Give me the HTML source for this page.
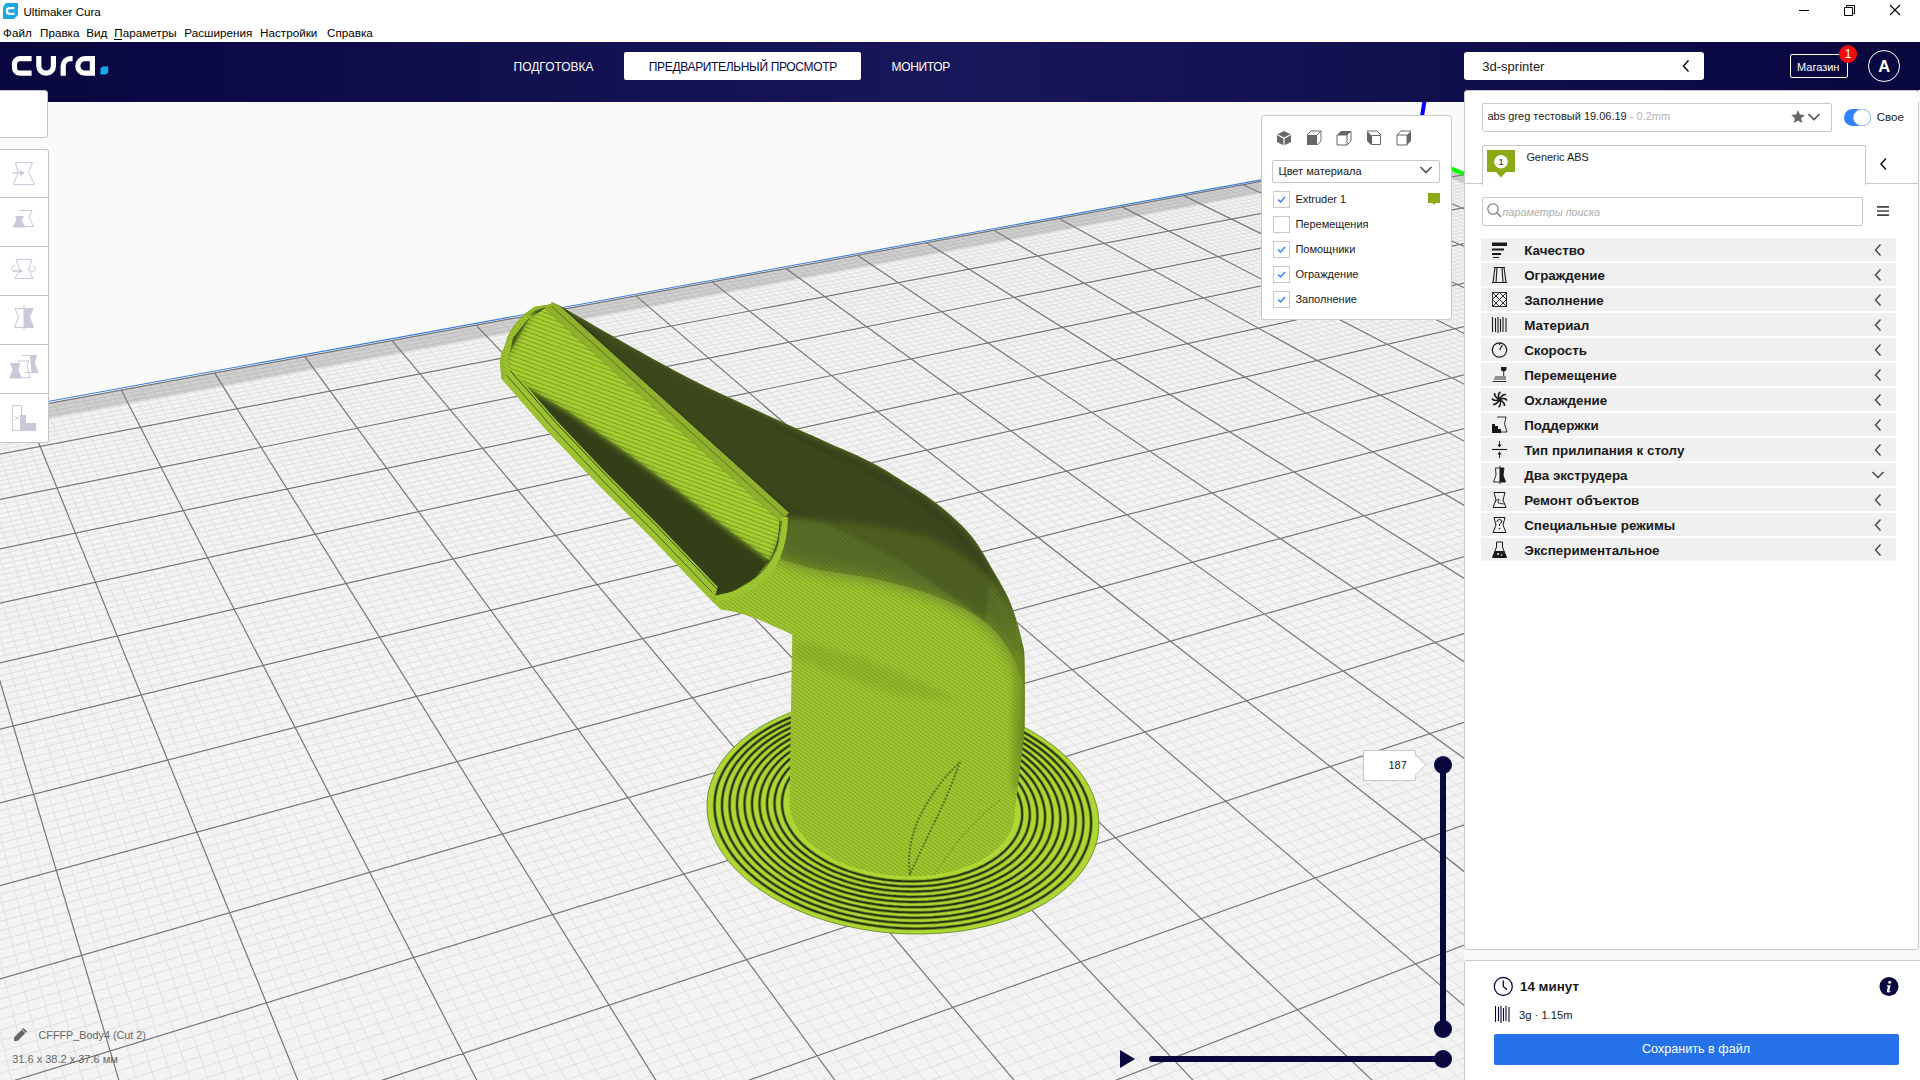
<!DOCTYPE html>
<html><head><meta charset="utf-8">
<style>
*{box-sizing:border-box;margin:0;padding:0}
html,body{width:1920px;height:1080px;overflow:hidden;background:#fafafa;font-family:"Liberation Sans",sans-serif;color:#191919}
.abs{position:absolute}
#titlebar{position:absolute;left:0;top:0;width:1920px;height:21px;background:#fff}
#menubar{position:absolute;left:0;top:21px;width:1920px;height:21px;background:#fff}
.menu{position:absolute;top:26px;font-size:12px;color:#000;line-height:14px;white-space:nowrap}
#header{position:absolute;left:0;top:42px;width:1920px;height:60px;background:linear-gradient(90deg,#08073f 0%,#19175b 50%,#08073f 100%)}
.tab{position:absolute;top:59px;font-size:12px;line-height:14px;color:#fff;white-space:nowrap}
#vp{position:absolute;left:0;top:102px;width:1920px;height:978px}
.tbtn{position:absolute;left:0;width:49px;height:49px;background:#fff;border:1px solid #c4c4c4;border-left:none}
.panel{position:absolute;background:#fff;border:1px solid #c8c8c8}
.txt{position:absolute;white-space:nowrap;line-height:1}
.cat{position:absolute;left:1481px;width:415px;height:23px;background:#f0f0f0}
.cat .lbl{position:absolute;left:43px;top:5px;font-size:13.4px;font-weight:bold;color:#191919;white-space:nowrap;line-height:14px}
.cat svg{position:absolute}
.chk{position:absolute;left:1272px;width:18px;height:18px;border:1px solid #c8c8c8;background:#fff}
.vlbl{position:absolute;left:1295px;font-size:11.5px;color:#191919;white-space:nowrap;line-height:13px}
</style></head><body>

<svg class="abs" style="left:0;top:0" width="1920" height="1080" viewBox="0 0 1920 1080">
<rect x="0" y="102" width="1464" height="978" fill="#fafafa"/>
<defs><clipPath id="vpc"><rect x="0" y="102" width="1464" height="978"/></clipPath></defs>
<g clip-path="url(#vpc)">
<polygon fill="#f3f3f3" points="-401.6,485.4 1417.4,152.5 2714.5,675.1 -447.6,2156.8"/>
<path d="M-390.2 483.3L-417.8 2142.8M-378.7 481.2L-388.3 2129.0M-367.3 479.1L-359.1 2115.3M-356.0 477.0L-330.2 2101.8M-344.7 474.9L-301.6 2088.4M-333.5 472.9L-273.2 2075.1M-322.3 470.8L-245.2 2061.9M-311.1 468.8L-217.4 2048.9M-300.0 466.8L-189.9 2036.0M-277.9 462.7L-135.7 2010.6M-266.9 460.7L-109.0 1998.1M-256.0 458.7L-82.5 1985.7M-245.1 456.7L-56.3 1973.5M-234.2 454.7L-30.4 1961.3M-223.4 452.7L-4.7 1949.3M-212.6 450.8L20.7 1937.3M-201.9 448.8L46.0 1925.5M-191.2 446.8L70.9 1913.8M-169.9 443.0L120.2 1890.7M-159.3 441.0L144.5 1879.4M-148.8 439.1L168.6 1868.1M-138.3 437.2L192.4 1856.9M-127.9 435.3L216.0 1845.8M-117.5 433.4L239.4 1834.9M-107.1 431.5L262.6 1824.0M-96.8 429.6L285.6 1813.2M-86.5 427.7L308.4 1802.5M-66.0 423.9L353.4 1781.5M-55.8 422.1L375.6 1771.1M-45.7 420.2L397.6 1760.8M-35.6 418.4L419.4 1750.6M-25.5 416.5L441.0 1740.4M-15.5 414.7L462.4 1730.4M-5.5 412.9L483.6 1720.4M4.5 411.1L504.7 1710.6M14.4 409.2L525.5 1700.8M34.1 405.6L566.8 1681.5M43.9 403.8L587.1 1672.0M53.7 402.1L607.3 1662.5M63.4 400.3L627.3 1653.1M73.1 398.5L647.1 1643.8M82.8 396.7L666.8 1634.6M92.4 395.0L686.3 1625.5M102.0 393.2L705.6 1616.4M111.6 391.5L724.8 1607.4M130.6 388.0L762.7 1589.7M140.0 386.3L781.5 1580.9M149.5 384.5L800.0 1572.2M158.9 382.8L818.5 1563.5M168.2 381.1L836.7 1555.0M177.5 379.4L854.9 1546.5M186.8 377.7L872.8 1538.1M196.1 376.0L890.7 1529.7M205.3 374.3L908.4 1521.4M223.6 371.0L943.4 1505.0M232.8 369.3L960.6 1496.9M241.9 367.6L977.8 1488.9M250.9 366.0L994.8 1480.9M260.0 364.3L1011.7 1473.0M268.9 362.7L1028.5 1465.1M277.9 361.0L1045.1 1457.3M286.8 359.4L1061.6 1449.6M295.7 357.8L1078.0 1441.9M313.5 354.5L1110.4 1426.8M322.3 352.9L1126.4 1419.3M331.0 351.3L1142.3 1411.8M339.8 349.7L1158.0 1404.4M348.5 348.1L1173.7 1397.1M357.2 346.5L1189.2 1389.8M365.9 344.9L1204.7 1382.6M374.5 343.4L1220.0 1375.4M383.1 341.8L1235.2 1368.3M400.2 338.7L1265.3 1354.2M408.7 337.1L1280.1 1347.2M417.2 335.5L1294.9 1340.3M425.6 334.0L1309.5 1333.4M434.1 332.5L1324.1 1326.6M442.5 330.9L1338.5 1319.8M450.8 329.4L1352.9 1313.1M459.2 327.9L1367.1 1306.4M467.5 326.3L1381.3 1299.8M484.0 323.3L1409.3 1286.7M492.2 321.8L1423.1 1280.2M500.4 320.3L1436.9 1273.8M508.6 318.8L1450.5 1267.4M516.7 317.3L1464.1 1261.0M524.9 315.8L1477.6 1254.7M533.0 314.4L1490.9 1248.4M541.0 312.9L1504.2 1242.2M549.1 311.4L1517.4 1236.0M565.0 308.5L1543.5 1223.8M573.0 307.0L1556.5 1217.7M580.9 305.6L1569.3 1211.7M588.8 304.1L1582.1 1205.7M596.7 302.7L1594.7 1199.8M604.6 301.3L1607.3 1193.9M612.4 299.8L1619.8 1188.0M620.2 298.4L1632.2 1182.2M628.0 297.0L1644.6 1176.4M643.4 294.2L1669.0 1165.0M651.1 292.7L1681.1 1159.3M658.8 291.3L1693.1 1153.7M666.5 289.9L1705.1 1148.1M674.1 288.5L1716.9 1142.5M681.7 287.2L1728.7 1137.0M689.3 285.8L1740.4 1131.5M696.8 284.4L1752.1 1126.1M704.3 283.0L1763.6 1120.6M719.3 280.3L1786.5 1109.9M726.8 278.9L1797.9 1104.6M734.2 277.5L1809.1 1099.3M741.6 276.2L1820.3 1094.1M749.0 274.8L1831.5 1088.9M756.3 273.5L1842.5 1083.7M763.7 272.2L1853.5 1078.5M771.0 270.8L1864.5 1073.4M778.3 269.5L1875.3 1068.3M792.8 266.8L1896.8 1058.2M800.0 265.5L1907.5 1053.2M807.2 264.2L1918.1 1048.3M814.4 262.9L1928.6 1043.3M821.5 261.6L1939.1 1038.4M828.7 260.3L1949.5 1033.6M835.8 259.0L1959.8 1028.7M842.9 257.7L1970.1 1023.9M849.9 256.4L1980.3 1019.1M864.0 253.8L2000.5 1009.6M871.0 252.5L2010.6 1004.9M878.0 251.2L2020.5 1000.3M884.9 250.0L2030.5 995.6M891.9 248.7L2040.3 991.0M898.8 247.4L2050.1 986.4M905.7 246.2L2059.9 981.8M912.5 244.9L2069.5 977.3M919.4 243.7L2079.2 972.8M933.0 241.2L2098.2 963.9M939.8 239.9L2107.7 959.4M946.6 238.7L2117.1 955.0M953.3 237.5L2126.5 950.6M960.0 236.2L2135.8 946.3M966.7 235.0L2145.0 941.9M973.4 233.8L2154.2 937.6M980.1 232.6L2163.3 933.4M986.7 231.3L2172.4 929.1M1000.0 228.9L2190.5 920.6M1006.5 227.7L2199.4 916.5M1013.1 226.5L2208.3 912.3M1019.7 225.3L2217.1 908.2M1026.2 224.1L2225.9 904.0M1032.7 222.9L2234.6 899.9M1039.2 221.8L2243.3 895.9M1045.6 220.6L2252.0 891.8M1052.1 219.4L2260.6 887.8M1064.9 217.0L2277.6 879.8M1071.3 215.9L2286.1 875.8M1077.7 214.7L2294.5 871.9M1084.0 213.5L2302.8 868.0M1090.4 212.4L2311.2 864.1M1096.7 211.2L2319.4 860.2M1103.0 210.1L2327.7 856.4M1109.2 208.9L2335.8 852.5M1115.5 207.8L2344.0 848.7M1128.0 205.5L2360.1 841.1M1134.2 204.4L2368.1 837.4M1140.4 203.2L2376.1 833.7M1146.5 202.1L2384.0 829.9M1152.7 201.0L2391.9 826.2M1158.8 199.9L2399.8 822.6M1164.9 198.7L2407.6 818.9M1171.0 197.6L2415.3 815.3M1177.1 196.5L2423.0 811.7M1189.2 194.3L2438.4 804.5M1195.2 193.2L2446.0 800.9M1201.2 192.1L2453.5 797.4M1207.2 191.0L2461.0 793.9M1213.2 189.9L2468.5 790.3M1219.2 188.8L2476.0 786.9M1225.1 187.7L2483.4 783.4M1231.0 186.7L2490.8 779.9M1236.9 185.6L2498.1 776.5M1248.7 183.4L2512.6 769.7M1254.5 182.3L2519.9 766.3M1260.4 181.3L2527.0 762.9M1266.2 180.2L2534.2 759.6M1272.0 179.2L2541.3 756.2M1277.8 178.1L2548.4 752.9M1283.6 177.0L2555.4 749.6M1289.3 176.0L2562.4 746.3M1295.1 174.9L2569.4 743.1M1306.5 172.8L2583.3 736.6M1312.2 171.8L2590.1 733.4M1317.9 170.8L2597.0 730.2M1323.6 169.7L2603.8 727.0M1329.2 168.7L2610.5 723.8M1334.8 167.7L2617.3 720.6M1340.4 166.6L2624.0 717.5M1346.0 165.6L2630.6 714.4M1351.6 164.6L2637.3 711.3M1362.7 162.6L2650.5 705.1M1368.3 161.5L2657.0 702.0M1373.8 160.5L2663.5 699.0M1379.3 159.5L2670.0 695.9M1384.8 158.5L2676.4 692.9M1390.3 157.5L2682.9 689.9M1395.7 156.5L2689.3 686.9M1401.2 155.5L2695.6 683.9M1406.6 154.5L2701.9 681.0M1417.4 152.5L2714.5 675.1M-401.8 490.3L1423.2 154.9M-401.9 494.7L1428.3 156.9M-402.0 499.1L1433.4 159.0M-402.1 503.5L1438.5 161.0M-402.2 508.0L1443.6 163.1M-402.4 512.5L1448.8 165.2M-402.5 517.1L1454.0 167.3M-402.6 521.6L1459.2 169.4M-402.7 526.3L1464.5 171.5M-403.0 535.6L1475.1 175.8M-403.1 540.4L1480.4 177.9M-403.3 545.2L1485.8 180.1M-403.4 550.0L1491.2 182.3M-403.5 554.9L1496.7 184.5M-403.7 559.8L1502.2 186.7M-403.8 564.7L1507.7 188.9M-403.9 569.7L1513.2 191.1M-404.1 574.8L1518.8 193.4M-404.4 585.0L1530.0 197.9M-404.5 590.2L1535.7 200.2M-404.7 595.4L1541.4 202.5M-404.8 600.7L1547.2 204.8M-404.9 606.0L1553.0 207.1M-405.1 611.4L1558.8 209.5M-405.2 616.8L1564.6 211.8M-405.4 622.3L1570.5 214.2M-405.5 627.8L1576.4 216.6M-405.8 639.0L1588.4 221.4M-406.0 644.7L1594.4 223.8M-406.2 650.4L1600.5 226.3M-406.3 656.2L1606.6 228.7M-406.5 662.0L1612.7 231.2M-406.6 667.9L1618.9 233.7M-406.8 673.9L1625.1 236.2M-407.0 679.9L1631.4 238.7M-407.1 686.0L1637.7 241.3M-407.5 698.3L1650.4 246.4M-407.7 704.5L1656.8 249.0M-407.8 710.8L1663.3 251.6M-408.0 717.2L1669.8 254.2M-408.2 723.7L1676.3 256.8M-408.4 730.2L1682.9 259.5M-408.5 736.7L1689.5 262.2M-408.7 743.4L1696.2 264.8M-408.9 750.1L1702.9 267.5M-409.3 763.7L1716.4 273.0M-409.5 770.6L1723.3 275.8M-409.7 777.6L1730.2 278.5M-409.9 784.7L1737.1 281.3M-410.1 791.8L1744.1 284.1M-410.3 799.0L1751.1 287.0M-410.5 806.3L1758.2 289.8M-410.7 813.7L1765.3 292.7M-410.9 821.1L1772.5 295.6M-411.3 836.2L1787.0 301.4M-411.5 843.9L1794.3 304.4M-411.7 851.7L1801.7 307.3M-411.9 859.6L1809.1 310.3M-412.1 867.5L1816.5 313.3M-412.4 875.5L1824.1 316.4M-412.6 883.7L1831.6 319.4M-412.8 891.9L1839.2 322.5M-413.0 900.2L1846.9 325.6M-413.5 917.1L1862.4 331.8M-413.7 925.7L1870.3 335.0M-414.0 934.4L1878.2 338.1M-414.2 943.2L1886.1 341.3M-414.5 952.1L1894.1 344.6M-414.7 961.2L1902.2 347.8M-415.0 970.3L1910.3 351.1M-415.2 979.5L1918.5 354.4M-415.5 988.9L1926.7 357.7M-416.0 1007.9L1943.3 364.4M-416.3 1017.6L1951.8 367.8M-416.5 1027.4L1960.2 371.2M-416.8 1037.3L1968.8 374.7M-417.1 1047.4L1977.4 378.1M-417.4 1057.6L1986.0 381.6M-417.6 1067.9L1994.8 385.1M-417.9 1078.3L2003.6 388.7M-418.2 1088.9L2012.4 392.2M-418.8 1110.5L2030.3 399.5M-419.1 1121.5L2039.4 403.1M-419.4 1132.6L2048.5 406.8M-419.7 1143.9L2057.7 410.5M-420.1 1155.3L2067.0 414.2M-420.4 1166.9L2076.3 418.0M-420.7 1178.7L2085.7 421.8M-421.0 1190.6L2095.2 425.6M-421.4 1202.7L2104.8 429.4M-422.0 1227.3L2124.1 437.2M-422.4 1239.9L2133.9 441.2M-422.7 1252.7L2143.8 445.2M-423.1 1265.6L2153.7 449.2M-423.5 1278.8L2163.7 453.2M-423.8 1292.1L2173.8 457.3M-424.2 1305.6L2184.0 461.4M-424.6 1319.3L2194.2 465.5M-424.9 1333.2L2204.6 469.7M-425.7 1361.7L2225.5 478.1M-426.1 1376.2L2236.1 482.4M-426.5 1391.0L2246.8 486.7M-427.0 1406.0L2257.6 491.0M-427.4 1421.2L2268.4 495.4M-427.8 1436.7L2279.4 499.8M-428.2 1452.4L2290.4 504.2M-428.7 1468.3L2301.5 508.7M-429.1 1484.6L2312.8 513.2M-430.0 1517.8L2335.5 522.4M-430.5 1534.8L2347.0 527.0M-431.0 1552.0L2358.6 531.7M-431.5 1569.6L2370.3 536.4M-431.9 1587.5L2382.2 541.2M-432.4 1605.7L2394.1 546.0M-433.0 1624.1L2406.1 550.8M-433.5 1642.9L2418.2 555.7M-434.0 1662.0L2430.4 560.6M-435.1 1701.3L2455.2 570.6M-435.6 1721.4L2467.8 575.7M-436.2 1741.9L2480.4 580.8M-436.8 1762.8L2493.2 585.9M-437.4 1784.1L2506.1 591.1M-437.9 1805.7L2519.1 596.4M-438.6 1827.8L2532.3 601.7M-439.2 1850.2L2545.5 607.0M-439.8 1873.1L2558.9 612.4M-441.1 1920.2L2586.0 623.3M-441.8 1944.5L2599.8 628.9M-442.4 1969.2L2613.6 634.4M-443.1 1994.4L2627.6 640.1M-443.8 2020.1L2641.8 645.8M-444.6 2046.3L2656.0 651.5M-445.3 2073.1L2670.5 657.3M-446.1 2100.4L2685.0 663.2M-446.8 2128.3L2699.7 669.1" stroke="#e0e0e0" stroke-width="1" fill="none"/>
<polygon fill="#000" fill-opacity="0.145" points="-401.6,485.4 1417.4,152.5 1436.9,160.4 -402.1,502.2"/>
<polygon fill="#000" fill-opacity="0.13" points="1415.7,164.0 1436.4,160.2 2714.5,675.1 2690.5,686.3"/>
<path d="M-401.6 485.4L-447.6 2156.8M-288.9 464.7L-162.7 2023.3M-180.5 444.9L95.7 1902.2M-76.2 425.8L331.0 1792.0M24.3 407.4L546.2 1691.1M121.1 389.7L743.9 1598.5M214.5 372.6L925.9 1513.2M304.6 356.1L1094.2 1434.3M391.7 340.2L1250.3 1361.2M475.8 324.8L1395.3 1293.2M557.1 310.0L1530.5 1229.9M635.7 295.6L1656.8 1170.7M711.8 281.6L1775.1 1115.3M785.6 268.2L1886.1 1063.3M857.0 255.1L1990.4 1014.4M926.2 242.4L2088.7 968.3M993.4 230.1L2181.5 924.9M1058.5 218.2L2269.1 883.8M1121.7 206.6L2352.1 844.9M1183.2 195.4L2430.7 808.1M1242.8 184.5L2505.4 773.1M1300.8 173.9L2576.3 739.8M1357.2 163.6L2643.9 708.2M1412.0 153.5L2708.2 678.0M-401.6 485.8L1417.9 152.7M-402.9 530.9L1469.8 173.6M-404.2 579.9L1524.4 195.6M-405.7 633.4L1582.4 219.0M-407.3 692.1L1644.0 243.8M-409.1 756.9L1709.6 270.3M-411.1 828.6L1779.7 298.5M-413.3 908.6L1854.6 328.7M-415.7 998.3L1935.0 361.0M-418.5 1099.6L2021.3 395.8M-421.7 1214.9L2114.4 433.3M-425.3 1347.3L2215.0 473.9M-429.6 1501.0L2324.1 517.8M-434.5 1681.5L2442.8 565.6M-440.4 1896.4L2572.4 617.8M-447.6 2156.8L2714.5 675.1" stroke="#767676" stroke-width="1.2" fill="none"/>
<path d="M-401.6 483.6L1415.4 151.7" stroke="#3a7ee0" stroke-width="1.1" fill="none"/>
<path d="M1416.2 152.0 L1424.5 101" stroke="#0000ff" stroke-width="4"/>
<path d="M1416.2 154.5 L1485.8 182.6" stroke="#00ff00" stroke-width="4"/>
<path d="M1416.2 152.0 L1299.6 173.4" stroke="#ff0000" stroke-width="4"/>
<defs>
<filter id="blur8" x="-20%" y="-20%" width="140%" height="140%"><feGaussianBlur stdDeviation="9"/></filter>
<filter id="blur5" x="-20%" y="-20%" width="140%" height="140%"><feGaussianBlur stdDeviation="5"/></filter>
<filter id="blur3" x="-20%" y="-20%" width="140%" height="140%"><feGaussianBlur stdDeviation="3"/></filter>
<filter id="blur1" x="-20%" y="-20%" width="140%" height="140%"><feGaussianBlur stdDeviation="1.2"/></filter>
<pattern id="tex" width="3" height="3" patternUnits="userSpaceOnUse" patternTransform="rotate(35)"><rect width="3" height="3" fill="#a0c82e"/><rect y="2" width="3" height="1" fill="#86a82a"/></pattern>
<pattern id="texd" width="3" height="3" patternUnits="userSpaceOnUse" patternTransform="rotate(42)"><rect width="3" height="3" fill="#36401b"/><rect y="1" width="3" height="1" fill="#556a20"/></pattern>
<pattern id="texl" width="4" height="4" patternUnits="userSpaceOnUse" patternTransform="rotate(20)"><rect width="4" height="4" fill="#a8d22f"/><rect y="3" width="4" height="1" fill="#5f7a20"/></pattern>
</defs>
<path d="M1064.0 754.8 L1066.8 757.4 L1069.4 760.0 L1072.0 762.7 L1074.4 765.4 L1076.8 768.2 L1079.0 771.0 L1081.1 773.8 L1083.2 776.7 L1085.1 779.6 L1086.8 782.5 L1088.5 785.5 L1090.1 788.4 L1091.5 791.4 L1092.8 794.5 L1094.0 797.5 L1095.1 800.6 L1096.0 803.7 L1096.8 806.8 L1097.5 809.9 L1098.0 813.0 L1098.4 816.1 L1098.7 819.2 L1098.8 822.4 L1098.8 825.5 L1098.7 828.7 L1098.4 831.8 L1098.0 834.9 L1097.4 838.1 L1096.7 841.2 L1095.9 844.3 L1094.9 847.4 L1093.8 850.4 L1092.5 853.5 L1091.1 856.5 L1089.6 859.5 L1087.9 862.5 L1086.1 865.5 L1084.1 868.4 L1082.0 871.3 L1079.8 874.1 L1077.4 876.9 L1074.9 879.7 L1072.2 882.4 L1069.4 885.1 L1066.5 887.7 L1063.5 890.3 L1060.3 892.8 L1057.0 895.3 L1053.6 897.7 L1050.0 900.1 L1046.4 902.4 L1042.6 904.6 L1038.7 906.7 L1034.7 908.8 L1030.5 910.9 L1026.3 912.8 L1022.0 914.7 L1017.6 916.5 L1013.0 918.2 L1008.4 919.8 L1003.7 921.4 L998.9 922.8 L994.0 924.2 L989.1 925.5 L984.0 926.7 L978.9 927.8 L973.8 928.9 L968.5 929.8 L963.3 930.7 L957.9 931.4 L952.6 932.1 L947.1 932.6 L941.7 933.1 L936.2 933.5 L930.7 933.7 L925.1 933.9 L919.6 934.0 L914.0 934.0 L908.4 933.9 L902.8 933.7 L897.2 933.4 L891.6 933.0 L886.1 932.5 L880.5 931.9 L875.0 931.2 L869.5 930.4 L864.0 929.5 L858.5 928.6 L853.1 927.5 L847.8 926.4 L842.5 925.1 L837.2 923.8 L832.0 922.4 L826.9 920.9 L821.8 919.3 L816.8 917.7 L811.9 915.9 L807.0 914.1 L802.2 912.2 L797.6 910.2 L793.0 908.2 L788.5 906.1 L784.1 903.9 L779.7 901.7 L775.5 899.4 L771.5 897.0 L767.5 894.6 L763.6 892.1 L759.8 889.5 L756.2 886.9 L752.6 884.3 L749.2 881.6 L746.0 878.8 L742.8 876.1 L739.8 873.2 L736.9 870.4 L734.1 867.5 L731.4 864.6 L728.9 861.6 L726.5 858.6 L724.3 855.6 L722.2 852.6 L720.2 849.5 L718.4 846.4 L716.7 843.3 L715.1 840.2 L713.7 837.1 L712.4 834.0 L711.3 830.8 L710.2 827.7 L709.4 824.6 L708.6 821.4 L708.0 818.3 L707.6 815.2 L707.2 812.0 L707.1 808.9 L707.0 805.8 L707.1 802.7 L707.3 799.6 L707.6 796.6 L708.1 793.5 L708.7 790.5 L709.4 787.5 L710.3 784.6 L711.3 781.6 L712.4 778.7 L713.6 775.8 L714.9 773.0 L716.4 770.1 L718.0 767.4 L719.7 764.6 L721.5 761.9 L723.4 759.2 L725.4 756.6 L727.6 754.0 L729.8 751.5 L732.2 749.0 L734.6 746.5 L737.2 744.1 L739.8 741.7 L742.6 739.4 L745.4 737.2 L748.4 735.0 L751.4 732.8 L754.5 730.7 L757.7 728.7 L761.0 726.7 L764.4 724.7 L767.8 722.8 L771.3 721.0 L774.9 719.3 L778.6 717.6 L782.3 715.9 L786.1 714.3 L790.0 712.8 L793.9 711.4 L797.9 710.0 L801.9 708.6 L806.0 707.4 L810.2 706.2 L814.4 705.0 L818.6 704.0 L822.9 703.0 L827.3 702.0 L831.7 701.1 L836.1 700.3 L840.5 699.6 L845.0 698.9 L849.5 698.3 L854.1 697.8 L858.7 697.3 L863.3 696.9 L867.9 696.6 L872.5 696.3 L877.2 696.1 L881.9 696.0 L886.5 695.9 L891.2 695.9 L895.9 696.0 L900.6 696.2 L905.3 696.4 L910.1 696.7 L914.8 697.0 L919.5 697.5 L924.1 697.9 L928.8 698.5 L933.5 699.1 L938.1 699.8 L942.8 700.6 L947.4 701.4 L952.0 702.3 L956.5 703.3 L961.1 704.3 L965.6 705.4 L970.1 706.5 L974.5 707.8 L978.9 709.0 L983.3 710.4 L987.6 711.8 L991.9 713.3 L996.1 714.8 L1000.3 716.4 L1004.4 718.1 L1008.4 719.8 L1012.5 721.6 L1016.4 723.4 L1020.3 725.3 L1024.1 727.3 L1027.9 729.3 L1031.6 731.3 L1035.2 733.4 L1038.7 735.6 L1042.2 737.8 L1045.5 740.1 L1048.8 742.4 L1052.0 744.8 L1055.2 747.2 L1058.2 749.7 L1061.2 752.2Z" fill="#aed733"/>
<path d="M1002.8 773.6 L1004.4 775.3 L1006.0 776.9 L1007.5 778.6 L1009.0 780.3 L1010.3 782.1 L1011.6 783.8 L1012.9 785.6 L1014.0 787.4 L1015.1 789.2 L1016.1 791.0 L1017.1 792.8 L1017.9 794.7 L1018.7 796.5 L1019.4 798.4 L1020.0 800.3 L1020.6 802.2 L1021.1 804.1 L1021.4 806.0 L1021.8 807.9 L1022.0 809.8 L1022.1 811.7 L1022.2 813.6 L1022.2 815.5 L1022.1 817.4 L1021.9 819.3 L1021.6 821.2 L1021.2 823.1 L1020.8 825.0 L1020.3 826.9 L1019.6 828.8 L1019.0 830.6 L1018.2 832.5 L1017.3 834.3 L1016.4 836.1 L1015.3 837.9 L1014.2 839.7 L1013.0 841.4 L1011.8 843.1 L1010.4 844.9 L1009.0 846.5 L1007.5 848.2 L1005.9 849.8 L1004.2 851.4 L1002.4 853.0 L1000.6 854.6 L998.7 856.1 L996.8 857.6 L994.7 859.0 L992.6 860.4 L990.4 861.8 L988.2 863.1 L985.9 864.4 L983.5 865.7 L981.0 866.9 L978.5 868.0 L976.0 869.2 L973.4 870.2 L970.7 871.3 L967.9 872.3 L965.2 873.2 L962.3 874.1 L959.5 875.0 L956.5 875.8 L953.6 876.5 L950.6 877.2 L947.5 877.8 L944.5 878.4 L941.3 879.0 L938.2 879.5 L935.0 879.9 L931.8 880.3 L928.6 880.6 L925.4 880.9 L922.1 881.1 L918.8 881.2 L915.6 881.3 L912.3 881.4 L909.0 881.4 L905.6 881.3 L902.3 881.2 L899.0 881.0 L895.7 880.8 L892.4 880.5 L889.1 880.1 L885.8 879.8 L882.5 879.3 L879.3 878.8 L876.0 878.3 L872.8 877.6 L869.6 877.0 L866.5 876.3 L863.3 875.5 L860.2 874.7 L857.1 873.8 L854.1 872.9 L851.1 872.0 L848.1 871.0 L845.2 869.9 L842.4 868.8 L839.5 867.7 L836.8 866.5 L834.0 865.3 L831.4 864.0 L828.7 862.7 L826.2 861.4 L823.7 860.0 L821.2 858.6 L818.9 857.1 L816.5 855.6 L814.3 854.1 L812.1 852.5 L810.0 851.0 L807.9 849.3 L806.0 847.7 L804.1 846.0 L802.2 844.3 L800.5 842.6 L798.8 840.9 L797.2 839.1 L795.7 837.3 L794.2 835.5 L792.9 833.7 L791.6 831.9 L790.4 830.0 L789.2 828.2 L788.2 826.3 L787.2 824.4 L786.3 822.6 L785.5 820.7 L784.8 818.8 L784.2 816.8 L783.6 814.9 L783.1 813.0 L782.8 811.1 L782.5 809.2 L782.2 807.3 L782.1 805.4 L782.0 803.5 L782.1 801.6 L782.2 799.7 L782.4 797.8 L782.6 796.0 L783.0 794.1 L783.4 792.3 L783.9 790.4 L784.5 788.6 L785.2 786.8 L785.9 785.0 L786.7 783.3 L787.6 781.5 L788.6 779.8 L789.6 778.1 L790.7 776.4 L791.9 774.8 L793.2 773.1 L794.5 771.5 L795.9 769.9 L797.3 768.4 L798.9 766.8 L800.5 765.3 L802.1 763.9 L803.8 762.4 L805.6 761.0 L807.4 759.6 L809.3 758.3 L811.3 757.0 L813.3 755.7 L815.4 754.5 L817.5 753.2 L819.6 752.1 L821.9 750.9 L824.1 749.8 L826.4 748.8 L828.8 747.8 L831.2 746.8 L833.7 745.8 L836.2 744.9 L838.7 744.1 L841.2 743.2 L843.8 742.5 L846.5 741.7 L849.2 741.0 L851.9 740.4 L854.6 739.8 L857.4 739.2 L860.1 738.7 L863.0 738.2 L865.8 737.7 L868.6 737.4 L871.5 737.0 L874.4 736.7 L877.3 736.4 L880.3 736.2 L883.2 736.0 L886.1 735.9 L889.1 735.8 L892.1 735.8 L895.0 735.8 L898.0 735.9 L901.0 735.9 L904.0 736.1 L907.0 736.3 L909.9 736.5 L912.9 736.8 L915.9 737.1 L918.8 737.5 L921.8 737.9 L924.7 738.3 L927.7 738.8 L930.6 739.4 L933.5 739.9 L936.4 740.6 L939.2 741.2 L942.0 741.9 L944.9 742.7 L947.6 743.5 L950.4 744.3 L953.1 745.2 L955.8 746.1 L958.5 747.1 L961.2 748.1 L963.8 749.1 L966.3 750.2 L968.9 751.3 L971.3 752.4 L973.8 753.6 L976.2 754.8 L978.5 756.1 L980.9 757.4 L983.1 758.7 L985.3 760.0 L987.5 761.4 L989.6 762.9 L991.7 764.3 L993.7 765.8 L995.6 767.3 L997.5 768.8 L999.3 770.4 L1001.1 772.0ZM1009.0 771.7 L1010.7 773.4 L1012.4 775.2 L1014.0 777.0 L1015.6 778.8 L1017.0 780.7 L1018.4 782.5 L1019.7 784.4 L1021.0 786.3 L1022.1 788.2 L1023.2 790.1 L1024.2 792.1 L1025.2 794.1 L1026.0 796.0 L1026.8 798.0 L1027.4 800.0 L1028.0 802.0 L1028.6 804.0 L1029.0 806.1 L1029.3 808.1 L1029.6 810.1 L1029.7 812.1 L1029.8 814.2 L1029.8 816.2 L1029.7 818.2 L1029.5 820.3 L1029.2 822.3 L1028.8 824.3 L1028.4 826.3 L1027.8 828.3 L1027.2 830.3 L1026.5 832.3 L1025.7 834.2 L1024.7 836.2 L1023.7 838.1 L1022.7 840.0 L1021.5 841.9 L1020.2 843.8 L1018.9 845.6 L1017.4 847.5 L1015.9 849.2 L1014.3 851.0 L1012.6 852.8 L1010.9 854.5 L1009.0 856.2 L1007.1 857.8 L1005.1 859.4 L1003.0 861.0 L1000.8 862.5 L998.6 864.1 L996.2 865.5 L993.9 866.9 L991.4 868.3 L988.9 869.7 L986.3 871.0 L983.6 872.2 L980.9 873.4 L978.1 874.6 L975.2 875.7 L972.3 876.7 L969.4 877.7 L966.4 878.7 L963.3 879.6 L960.2 880.5 L957.0 881.3 L953.8 882.0 L950.6 882.7 L947.3 883.3 L944.0 883.9 L940.6 884.4 L937.3 884.9 L933.8 885.3 L930.4 885.6 L927.0 885.9 L923.5 886.1 L920.0 886.3 L916.5 886.4 L913.0 886.5 L909.4 886.5 L905.9 886.4 L902.4 886.3 L898.8 886.1 L895.3 885.8 L891.8 885.5 L888.3 885.2 L884.8 884.7 L881.3 884.3 L877.8 883.7 L874.3 883.1 L870.9 882.5 L867.5 881.8 L864.1 881.0 L860.8 880.2 L857.5 879.3 L854.2 878.4 L851.0 877.4 L847.8 876.4 L844.6 875.3 L841.5 874.2 L838.5 873.0 L835.4 871.8 L832.5 870.6 L829.6 869.3 L826.7 867.9 L824.0 866.5 L821.2 865.1 L818.6 863.6 L816.0 862.1 L813.4 860.5 L811.0 858.9 L808.6 857.3 L806.3 855.6 L804.0 854.0 L801.9 852.2 L799.8 850.5 L797.7 848.7 L795.8 846.9 L793.9 845.1 L792.2 843.2 L790.5 841.3 L788.8 839.4 L787.3 837.5 L785.9 835.6 L784.5 833.6 L783.2 831.7 L782.0 829.7 L780.9 827.7 L779.9 825.7 L779.0 823.7 L778.1 821.7 L777.4 819.6 L776.7 817.6 L776.2 815.6 L775.7 813.6 L775.3 811.5 L774.9 809.5 L774.7 807.5 L774.6 805.4 L774.5 803.4 L774.6 801.4 L774.7 799.4 L774.9 797.4 L775.2 795.4 L775.6 793.5 L776.1 791.5 L776.6 789.6 L777.2 787.6 L777.9 785.7 L778.7 783.8 L779.6 782.0 L780.6 780.1 L781.6 778.3 L782.7 776.5 L783.9 774.7 L785.2 772.9 L786.5 771.2 L787.9 769.5 L789.4 767.8 L791.0 766.1 L792.6 764.5 L794.3 762.9 L796.1 761.4 L797.9 759.9 L799.8 758.4 L801.7 756.9 L803.7 755.5 L805.8 754.1 L808.0 752.7 L810.2 751.4 L812.4 750.1 L814.7 748.9 L817.1 747.7 L819.5 746.5 L821.9 745.4 L824.4 744.3 L827.0 743.3 L829.6 742.3 L832.2 741.3 L834.9 740.4 L837.6 739.6 L840.4 738.7 L843.2 738.0 L846.0 737.2 L848.9 736.5 L851.8 735.9 L854.7 735.3 L857.7 734.7 L860.6 734.2 L863.7 733.8 L866.7 733.3 L869.7 733.0 L872.8 732.6 L875.9 732.4 L879.0 732.1 L882.1 732.0 L885.2 731.8 L888.4 731.7 L891.5 731.7 L894.6 731.7 L897.8 731.8 L901.0 731.9 L904.1 732.0 L907.3 732.2 L910.4 732.4 L913.6 732.7 L916.7 733.1 L919.9 733.5 L923.0 733.9 L926.1 734.4 L929.2 734.9 L932.3 735.5 L935.4 736.1 L938.4 736.7 L941.5 737.4 L944.5 738.2 L947.4 739.0 L950.4 739.8 L953.3 740.7 L956.2 741.6 L959.1 742.6 L961.9 743.6 L964.7 744.7 L967.5 745.8 L970.2 746.9 L972.9 748.1 L975.5 749.3 L978.1 750.5 L980.7 751.8 L983.2 753.1 L985.7 754.5 L988.1 755.9 L990.4 757.3 L992.7 758.8 L995.0 760.3 L997.1 761.8 L999.3 763.4 L1001.3 765.0 L1003.4 766.6 L1005.3 768.3 L1007.2 770.0ZM1015.2 769.8 L1017.0 771.6 L1018.8 773.5 L1020.5 775.4 L1022.2 777.3 L1023.7 779.3 L1025.2 781.2 L1026.6 783.2 L1027.9 785.2 L1029.2 787.2 L1030.3 789.3 L1031.4 791.4 L1032.4 793.4 L1033.3 795.5 L1034.1 797.6 L1034.9 799.7 L1035.5 801.9 L1036.0 804.0 L1036.5 806.1 L1036.9 808.3 L1037.2 810.4 L1037.3 812.6 L1037.4 814.7 L1037.4 816.9 L1037.3 819.0 L1037.1 821.2 L1036.9 823.3 L1036.5 825.5 L1036.0 827.6 L1035.4 829.7 L1034.8 831.8 L1034.0 833.9 L1033.1 836.0 L1032.2 838.1 L1031.1 840.1 L1030.0 842.2 L1028.8 844.2 L1027.4 846.2 L1026.0 848.1 L1024.5 850.1 L1022.9 852.0 L1021.2 853.9 L1019.4 855.7 L1017.6 857.5 L1015.6 859.3 L1013.6 861.1 L1011.4 862.8 L1009.2 864.5 L1006.9 866.1 L1004.5 867.7 L1002.1 869.3 L999.6 870.8 L997.0 872.3 L994.3 873.7 L991.5 875.1 L988.7 876.4 L985.8 877.7 L982.8 878.9 L979.8 880.1 L976.7 881.2 L973.6 882.3 L970.4 883.3 L967.1 884.3 L963.8 885.2 L960.5 886.0 L957.1 886.8 L953.6 887.6 L950.2 888.2 L946.6 888.9 L943.1 889.4 L939.5 889.9 L935.9 890.3 L932.2 890.7 L928.5 891.0 L924.9 891.2 L921.1 891.4 L917.4 891.5 L913.7 891.6 L909.9 891.6 L906.2 891.5 L902.4 891.4 L898.7 891.2 L894.9 890.9 L891.2 890.6 L887.4 890.2 L883.7 889.8 L880.0 889.2 L876.3 888.7 L872.6 888.0 L869.0 887.4 L865.4 886.6 L861.8 885.8 L858.2 884.9 L854.7 884.0 L851.2 883.0 L847.8 882.0 L844.4 880.9 L841.1 879.7 L837.8 878.5 L834.5 877.3 L831.3 876.0 L828.2 874.7 L825.1 873.3 L822.1 871.8 L819.1 870.3 L816.3 868.8 L813.4 867.2 L810.7 865.6 L808.0 864.0 L805.4 862.3 L802.9 860.5 L800.4 858.8 L798.0 857.0 L795.7 855.1 L793.5 853.3 L791.4 851.4 L789.3 849.5 L787.4 847.5 L785.5 845.5 L783.7 843.6 L782.0 841.5 L780.4 839.5 L778.9 837.4 L777.4 835.4 L776.1 833.3 L774.8 831.2 L773.7 829.1 L772.6 827.0 L771.6 824.8 L770.8 822.7 L770.0 820.5 L769.3 818.4 L768.7 816.2 L768.2 814.1 L767.8 811.9 L767.4 809.8 L767.2 807.6 L767.1 805.5 L767.0 803.3 L767.1 801.2 L767.2 799.1 L767.5 797.0 L767.8 794.9 L768.2 792.8 L768.7 790.7 L769.3 788.7 L770.0 786.6 L770.7 784.6 L771.6 782.6 L772.5 780.6 L773.6 778.7 L774.7 776.7 L775.9 774.8 L777.1 772.9 L778.5 771.1 L779.9 769.3 L781.4 767.4 L783.0 765.7 L784.6 763.9 L786.4 762.2 L788.2 760.5 L790.0 758.9 L792.0 757.3 L794.0 755.7 L796.0 754.2 L798.2 752.7 L800.4 751.2 L802.7 749.8 L805.0 748.4 L807.4 747.1 L809.8 745.7 L812.3 744.5 L814.8 743.3 L817.4 742.1 L820.1 740.9 L822.8 739.8 L825.5 738.8 L828.3 737.8 L831.2 736.8 L834.0 735.9 L837.0 735.0 L839.9 734.2 L842.9 733.4 L845.9 732.7 L849.0 732.0 L852.1 731.4 L855.2 730.8 L858.4 730.3 L861.5 729.8 L864.7 729.4 L867.9 729.0 L871.2 728.6 L874.4 728.3 L877.7 728.1 L881.0 727.9 L884.3 727.8 L887.6 727.7 L890.9 727.6 L894.3 727.6 L897.6 727.7 L900.9 727.8 L904.3 728.0 L907.6 728.2 L910.9 728.4 L914.3 728.7 L917.6 729.1 L920.9 729.5 L924.2 729.9 L927.5 730.4 L930.8 731.0 L934.0 731.6 L937.3 732.2 L940.5 732.9 L943.7 733.7 L946.9 734.5 L950.0 735.3 L953.1 736.2 L956.2 737.1 L959.3 738.1 L962.3 739.1 L965.3 740.2 L968.3 741.3 L971.2 742.4 L974.1 743.6 L976.9 744.9 L979.7 746.1 L982.5 747.5 L985.2 748.8 L987.8 750.2 L990.4 751.6 L993.0 753.1 L995.5 754.6 L997.9 756.2 L1000.3 757.8 L1002.6 759.4 L1004.9 761.0 L1007.1 762.7 L1009.2 764.5 L1011.3 766.2 L1013.2 768.0ZM1021.3 767.9 L1023.3 769.8 L1025.2 771.8 L1027.0 773.8 L1028.7 775.8 L1030.4 777.9 L1032.0 779.9 L1033.5 782.0 L1034.9 784.1 L1036.2 786.3 L1037.4 788.4 L1038.6 790.6 L1039.6 792.8 L1040.6 795.0 L1041.5 797.2 L1042.3 799.5 L1042.9 801.7 L1043.5 804.0 L1044.0 806.2 L1044.4 808.5 L1044.7 810.7 L1045.0 813.0 L1045.1 815.3 L1045.1 817.6 L1045.0 819.8 L1044.8 822.1 L1044.5 824.4 L1044.1 826.6 L1043.6 828.9 L1043.0 831.1 L1042.3 833.4 L1041.5 835.6 L1040.7 837.8 L1039.7 840.0 L1038.6 842.2 L1037.4 844.3 L1036.1 846.4 L1034.7 848.5 L1033.2 850.6 L1031.6 852.7 L1029.9 854.7 L1028.1 856.7 L1026.3 858.7 L1024.3 860.6 L1022.2 862.5 L1020.1 864.3 L1017.8 866.2 L1015.5 868.0 L1013.1 869.7 L1010.6 871.4 L1008.0 873.1 L1005.3 874.7 L1002.5 876.2 L999.7 877.7 L996.8 879.2 L993.8 880.6 L990.8 882.0 L987.6 883.3 L984.4 884.5 L981.2 885.7 L977.9 886.9 L974.5 888.0 L971.0 889.0 L967.5 890.0 L964.0 890.9 L960.4 891.7 L956.7 892.5 L953.0 893.2 L949.3 893.9 L945.5 894.4 L941.7 895.0 L937.9 895.4 L934.0 895.8 L930.1 896.1 L926.2 896.4 L922.3 896.6 L918.4 896.7 L914.4 896.8 L910.4 896.8 L906.4 896.7 L902.5 896.5 L898.5 896.3 L894.5 896.0 L890.5 895.7 L886.6 895.3 L882.6 894.8 L878.7 894.3 L874.8 893.7 L870.9 893.0 L867.1 892.3 L863.2 891.5 L859.4 890.6 L855.7 889.7 L851.9 888.7 L848.3 887.6 L844.6 886.5 L841.0 885.4 L837.5 884.2 L834.0 882.9 L830.6 881.6 L827.2 880.2 L823.9 878.8 L820.6 877.3 L817.4 875.8 L814.3 874.2 L811.3 872.5 L808.3 870.9 L805.4 869.2 L802.6 867.4 L799.8 865.6 L797.1 863.8 L794.5 861.9 L792.0 860.0 L789.6 858.1 L787.3 856.1 L785.0 854.1 L782.9 852.0 L780.8 850.0 L778.8 847.9 L776.9 845.8 L775.1 843.6 L773.5 841.5 L771.8 839.3 L770.3 837.1 L768.9 834.9 L767.6 832.7 L766.4 830.5 L765.3 828.2 L764.3 826.0 L763.4 823.7 L762.5 821.4 L761.8 819.2 L761.2 816.9 L760.7 814.6 L760.3 812.3 L759.9 810.1 L759.7 807.8 L759.6 805.5 L759.5 803.3 L759.6 801.0 L759.8 798.8 L760.0 796.6 L760.4 794.3 L760.8 792.1 L761.4 790.0 L762.0 787.8 L762.7 785.6 L763.6 783.5 L764.5 781.4 L765.5 779.3 L766.6 777.2 L767.7 775.2 L769.0 773.2 L770.3 771.2 L771.8 769.3 L773.3 767.3 L774.9 765.4 L776.6 763.6 L778.3 761.7 L780.1 759.9 L782.0 758.2 L784.0 756.4 L786.1 754.7 L788.2 753.1 L790.4 751.5 L792.6 749.9 L795.0 748.3 L797.4 746.8 L799.8 745.4 L802.3 744.0 L804.9 742.6 L807.5 741.3 L810.2 740.0 L813.0 738.7 L815.8 737.6 L818.6 736.4 L821.5 735.3 L824.5 734.2 L827.4 733.2 L830.5 732.3 L833.5 731.4 L836.7 730.5 L839.8 729.7 L843.0 728.9 L846.2 728.2 L849.5 727.5 L852.8 726.9 L856.1 726.4 L859.4 725.9 L862.8 725.4 L866.2 725.0 L869.6 724.6 L873.0 724.3 L876.5 724.1 L879.9 723.9 L883.4 723.7 L886.9 723.6 L890.4 723.6 L893.9 723.6 L897.4 723.6 L900.9 723.8 L904.4 723.9 L907.9 724.1 L911.4 724.4 L914.9 724.7 L918.4 725.1 L921.9 725.5 L925.4 726.0 L928.8 726.5 L932.3 727.1 L935.7 727.7 L939.1 728.4 L942.5 729.1 L945.9 729.9 L949.2 730.8 L952.6 731.6 L955.9 732.6 L959.1 733.5 L962.3 734.6 L965.5 735.6 L968.7 736.7 L971.8 737.9 L974.9 739.1 L977.9 740.4 L980.9 741.7 L983.9 743.0 L986.8 744.4 L989.6 745.8 L992.4 747.3 L995.2 748.8 L997.9 750.4 L1000.5 752.0 L1003.1 753.6 L1005.6 755.2 L1008.0 757.0 L1010.4 758.7 L1012.7 760.5 L1015.0 762.3 L1017.2 764.1 L1019.3 766.0ZM1027.5 766.0 L1029.6 768.0 L1031.6 770.1 L1033.5 772.2 L1035.3 774.3 L1037.1 776.5 L1038.7 778.7 L1040.3 780.9 L1041.8 783.1 L1043.2 785.3 L1044.5 787.6 L1045.7 789.9 L1046.9 792.2 L1047.9 794.5 L1048.8 796.8 L1049.7 799.2 L1050.4 801.5 L1051.0 803.9 L1051.6 806.3 L1052.0 808.7 L1052.3 811.1 L1052.6 813.5 L1052.7 815.9 L1052.7 818.3 L1052.6 820.7 L1052.5 823.1 L1052.2 825.4 L1051.8 827.8 L1051.3 830.2 L1050.7 832.6 L1049.9 834.9 L1049.1 837.3 L1048.2 839.6 L1047.2 841.9 L1046.0 844.2 L1044.8 846.5 L1043.4 848.7 L1042.0 850.9 L1040.4 853.1 L1038.7 855.3 L1037.0 857.4 L1035.1 859.6 L1033.1 861.6 L1031.1 863.7 L1028.9 865.7 L1026.6 867.6 L1024.3 869.6 L1021.8 871.5 L1019.3 873.3 L1016.6 875.1 L1013.9 876.9 L1011.1 878.6 L1008.2 880.2 L1005.2 881.8 L1002.1 883.4 L999.0 884.9 L995.7 886.3 L992.5 887.7 L989.1 889.0 L985.6 890.3 L982.1 891.5 L978.6 892.7 L974.9 893.7 L971.2 894.8 L967.5 895.7 L963.7 896.6 L959.8 897.4 L955.9 898.2 L952.0 898.9 L948.0 899.5 L944.0 900.1 L940.0 900.5 L935.9 901.0 L931.8 901.3 L927.6 901.6 L923.5 901.8 L919.3 901.9 L915.1 902.0 L910.9 902.0 L906.7 901.9 L902.5 901.7 L898.3 901.5 L894.1 901.2 L889.9 900.8 L885.7 900.4 L881.6 899.9 L877.4 899.3 L873.3 898.7 L869.2 898.0 L865.1 897.2 L861.1 896.3 L857.1 895.4 L853.1 894.4 L849.2 893.4 L845.3 892.3 L841.4 891.1 L837.6 889.9 L833.9 888.6 L830.2 887.3 L826.6 885.9 L823.0 884.4 L819.5 882.9 L816.1 881.3 L812.7 879.7 L809.5 878.0 L806.2 876.3 L803.1 874.6 L800.0 872.7 L797.1 870.9 L794.2 869.0 L791.4 867.0 L788.6 865.1 L786.0 863.0 L783.5 861.0 L781.0 858.9 L778.6 856.8 L776.4 854.6 L774.2 852.5 L772.1 850.3 L770.1 848.0 L768.3 845.8 L766.5 843.5 L764.8 841.2 L763.2 838.9 L761.8 836.5 L760.4 834.2 L759.1 831.8 L758.0 829.5 L756.9 827.1 L755.9 824.7 L755.1 822.3 L754.4 819.9 L753.7 817.5 L753.2 815.1 L752.7 812.7 L752.4 810.3 L752.2 807.9 L752.1 805.6 L752.0 803.2 L752.1 800.8 L752.3 798.5 L752.6 796.1 L753.0 793.8 L753.5 791.5 L754.0 789.2 L754.7 786.9 L755.5 784.6 L756.4 782.4 L757.4 780.2 L758.4 778.0 L759.6 775.8 L760.8 773.7 L762.2 771.6 L763.6 769.5 L765.1 767.4 L766.7 765.4 L768.4 763.4 L770.2 761.5 L772.0 759.5 L773.9 757.6 L775.9 755.8 L778.0 754.0 L780.2 752.2 L782.4 750.5 L784.7 748.8 L787.1 747.1 L789.6 745.5 L792.1 743.9 L794.7 742.4 L797.3 740.9 L800.0 739.5 L802.8 738.1 L805.6 736.7 L808.5 735.4 L811.5 734.2 L814.5 733.0 L817.5 731.8 L820.6 730.7 L823.7 729.7 L826.9 728.7 L830.2 727.7 L833.4 726.8 L836.7 725.9 L840.1 725.1 L843.5 724.4 L846.9 723.7 L850.3 723.1 L853.8 722.5 L857.3 721.9 L860.9 721.5 L864.4 721.0 L868.0 720.7 L871.6 720.3 L875.2 720.1 L878.8 719.9 L882.5 719.7 L886.1 719.6 L889.8 719.6 L893.5 719.6 L897.2 719.6 L900.9 719.7 L904.5 719.9 L908.2 720.1 L911.9 720.4 L915.6 720.8 L919.2 721.2 L922.9 721.6 L926.6 722.1 L930.2 722.6 L933.8 723.2 L937.4 723.9 L941.0 724.6 L944.6 725.4 L948.1 726.2 L951.6 727.1 L955.1 728.0 L958.6 729.0 L962.0 730.0 L965.4 731.0 L968.7 732.2 L972.1 733.3 L975.3 734.6 L978.6 735.8 L981.8 737.1 L984.9 738.5 L988.0 739.9 L991.1 741.4 L994.1 742.9 L997.0 744.4 L999.9 746.0 L1002.7 747.6 L1005.5 749.3 L1008.2 751.0 L1010.9 752.7 L1013.5 754.5 L1016.0 756.3 L1018.4 758.2 L1020.8 760.1 L1023.1 762.0 L1025.3 764.0ZM1033.6 764.1 L1035.8 766.3 L1037.9 768.4 L1039.9 770.6 L1041.9 772.8 L1043.7 775.1 L1045.5 777.4 L1047.1 779.7 L1048.7 782.0 L1050.2 784.4 L1051.6 786.7 L1052.9 789.1 L1054.1 791.6 L1055.2 794.0 L1056.2 796.4 L1057.1 798.9 L1057.8 801.4 L1058.5 803.9 L1059.1 806.4 L1059.6 808.9 L1059.9 811.4 L1060.2 813.9 L1060.3 816.4 L1060.4 818.9 L1060.3 821.5 L1060.1 824.0 L1059.8 826.5 L1059.4 829.0 L1058.9 831.5 L1058.3 834.0 L1057.6 836.5 L1056.7 838.9 L1055.7 841.4 L1054.7 843.8 L1053.5 846.2 L1052.2 848.6 L1050.8 851.0 L1049.2 853.3 L1047.6 855.6 L1045.9 857.9 L1044.0 860.2 L1042.1 862.4 L1040.0 864.6 L1037.8 866.8 L1035.6 868.9 L1033.2 871.0 L1030.7 873.0 L1028.1 875.0 L1025.5 876.9 L1022.7 878.8 L1019.8 880.7 L1016.9 882.5 L1013.8 884.2 L1010.7 885.9 L1007.5 887.6 L1004.2 889.1 L1000.8 890.7 L997.3 892.1 L993.8 893.5 L990.1 894.9 L986.4 896.1 L982.7 897.4 L978.9 898.5 L975.0 899.6 L971.0 900.6 L967.0 901.5 L963.0 902.4 L958.9 903.2 L954.7 904.0 L950.5 904.6 L946.3 905.2 L942.0 905.7 L937.7 906.1 L933.4 906.5 L929.0 906.8 L924.6 907.0 L920.3 907.2 L915.8 907.2 L911.4 907.2 L907.0 907.1 L902.6 907.0 L898.1 906.7 L893.7 906.4 L889.3 906.0 L884.9 905.6 L880.5 905.0 L876.1 904.4 L871.8 903.7 L867.4 903.0 L863.1 902.2 L858.9 901.3 L854.7 900.3 L850.5 899.3 L846.3 898.2 L842.2 897.0 L838.2 895.8 L834.2 894.5 L830.3 893.1 L826.4 891.7 L822.6 890.2 L818.8 888.7 L815.2 887.1 L811.6 885.4 L808.0 883.7 L804.6 881.9 L801.2 880.1 L797.9 878.2 L794.7 876.3 L791.6 874.4 L788.5 872.4 L785.6 870.3 L782.7 868.2 L779.9 866.1 L777.3 863.9 L774.7 861.7 L772.2 859.5 L769.8 857.2 L767.6 854.9 L765.4 852.6 L763.3 850.3 L761.4 847.9 L759.5 845.5 L757.8 843.1 L756.1 840.6 L754.6 838.2 L753.1 835.7 L751.8 833.2 L750.6 830.7 L749.5 828.2 L748.5 825.7 L747.6 823.2 L746.9 820.7 L746.2 818.2 L745.7 815.7 L745.2 813.1 L744.9 810.6 L744.7 808.1 L744.6 805.6 L744.5 803.1 L744.6 800.6 L744.9 798.2 L745.2 795.7 L745.6 793.2 L746.1 790.8 L746.7 788.4 L747.5 786.0 L748.3 783.6 L749.2 781.3 L750.3 779.0 L751.4 776.7 L752.6 774.4 L753.9 772.2 L755.3 769.9 L756.8 767.8 L758.4 765.6 L760.1 763.5 L761.9 761.4 L763.8 759.4 L765.7 757.3 L767.8 755.4 L769.9 753.4 L772.1 751.5 L774.4 749.7 L776.7 747.9 L779.1 746.1 L781.6 744.3 L784.2 742.7 L786.9 741.0 L789.6 739.4 L792.4 737.9 L795.2 736.4 L798.1 734.9 L801.1 733.5 L804.1 732.1 L807.2 730.8 L810.3 729.6 L813.5 728.4 L816.8 727.2 L820.1 726.1 L823.4 725.1 L826.8 724.1 L830.2 723.1 L833.7 722.2 L837.2 721.4 L840.7 720.6 L844.3 719.9 L847.9 719.2 L851.6 718.6 L855.2 718.0 L858.9 717.5 L862.7 717.1 L866.4 716.7 L870.2 716.4 L874.0 716.1 L877.8 715.9 L881.6 715.7 L885.4 715.6 L889.3 715.6 L893.1 715.6 L897.0 715.6 L900.8 715.8 L904.7 715.9 L908.5 716.2 L912.4 716.5 L916.2 716.8 L920.1 717.2 L923.9 717.7 L927.7 718.2 L931.5 718.8 L935.3 719.4 L939.1 720.1 L942.9 720.8 L946.6 721.6 L950.3 722.5 L954.0 723.4 L957.6 724.4 L961.3 725.4 L964.8 726.4 L968.4 727.6 L971.9 728.7 L975.4 730.0 L978.8 731.2 L982.2 732.5 L985.6 733.9 L988.9 735.3 L992.1 736.8 L995.3 738.3 L998.5 739.9 L1001.6 741.5 L1004.6 743.2 L1007.6 744.9 L1010.5 746.6 L1013.4 748.4 L1016.1 750.2 L1018.8 752.1 L1021.5 754.0 L1024.1 756.0 L1026.6 757.9 L1029.0 760.0 L1031.3 762.0ZM1039.7 762.2 L1042.0 764.5 L1044.2 766.7 L1046.4 769.0 L1048.4 771.4 L1050.4 773.7 L1052.2 776.1 L1054.0 778.5 L1055.6 780.9 L1057.2 783.4 L1058.7 785.9 L1060.0 788.4 L1061.3 790.9 L1062.4 793.5 L1063.5 796.0 L1064.4 798.6 L1065.3 801.2 L1066.0 803.8 L1066.6 806.4 L1067.1 809.1 L1067.5 811.7 L1067.8 814.3 L1068.0 817.0 L1068.1 819.6 L1068.0 822.3 L1067.8 824.9 L1067.5 827.6 L1067.1 830.2 L1066.6 832.8 L1065.9 835.4 L1065.2 838.0 L1064.3 840.6 L1063.3 843.2 L1062.2 845.7 L1061.0 848.3 L1059.6 850.8 L1058.1 853.3 L1056.6 855.7 L1054.9 858.2 L1053.0 860.6 L1051.1 863.0 L1049.1 865.3 L1046.9 867.6 L1044.7 869.9 L1042.3 872.1 L1039.8 874.3 L1037.2 876.4 L1034.5 878.5 L1031.7 880.6 L1028.8 882.6 L1025.8 884.5 L1022.7 886.4 L1019.5 888.2 L1016.2 890.0 L1012.8 891.8 L1009.4 893.4 L1005.8 895.0 L1002.2 896.6 L998.5 898.1 L994.7 899.5 L990.8 900.8 L986.8 902.1 L982.8 903.3 L978.7 904.4 L974.6 905.5 L970.4 906.5 L966.1 907.4 L961.8 908.3 L957.4 909.1 L953.0 909.7 L948.6 910.4 L944.1 910.9 L939.6 911.4 L935.0 911.8 L930.4 912.1 L925.8 912.3 L921.2 912.4 L916.6 912.5 L911.9 912.5 L907.3 912.4 L902.6 912.2 L898.0 912.0 L893.3 911.6 L888.7 911.2 L884.0 910.7 L879.4 910.2 L874.8 909.5 L870.2 908.8 L865.7 908.0 L861.2 907.2 L856.7 906.2 L852.3 905.2 L847.9 904.1 L843.5 902.9 L839.2 901.7 L835.0 900.4 L830.8 899.0 L826.6 897.6 L822.6 896.1 L818.6 894.5 L814.6 892.9 L810.8 891.2 L807.0 889.5 L803.3 887.7 L799.7 885.8 L796.1 883.9 L792.7 882.0 L789.3 879.9 L786.0 877.9 L782.8 875.8 L779.7 873.6 L776.7 871.4 L773.8 869.2 L771.1 866.9 L768.4 864.6 L765.8 862.2 L763.3 859.8 L760.9 857.4 L758.6 855.0 L756.5 852.5 L754.4 850.0 L752.5 847.5 L750.7 845.0 L749.0 842.4 L747.4 839.8 L745.9 837.2 L744.5 834.6 L743.3 832.0 L742.1 829.4 L741.1 826.7 L740.2 824.1 L739.4 821.5 L738.7 818.8 L738.1 816.2 L737.7 813.5 L737.4 810.9 L737.1 808.3 L737.0 805.6 L737.0 803.0 L737.2 800.4 L737.4 797.8 L737.7 795.3 L738.2 792.7 L738.8 790.2 L739.4 787.6 L740.2 785.1 L741.1 782.7 L742.1 780.2 L743.2 777.8 L744.4 775.4 L745.6 773.0 L747.0 770.6 L748.5 768.3 L750.1 766.0 L751.8 763.8 L753.6 761.6 L755.5 759.4 L757.4 757.3 L759.5 755.2 L761.6 753.1 L763.8 751.1 L766.1 749.1 L768.5 747.1 L771.0 745.3 L773.5 743.4 L776.2 741.6 L778.9 739.8 L781.6 738.1 L784.5 736.5 L787.4 734.8 L790.4 733.3 L793.4 731.7 L796.5 730.3 L799.7 728.9 L802.9 727.5 L806.2 726.2 L809.5 724.9 L812.9 723.7 L816.4 722.6 L819.9 721.5 L823.4 720.4 L827.0 719.5 L830.6 718.5 L834.3 717.7 L838.0 716.9 L841.8 716.1 L845.5 715.4 L849.3 714.8 L853.2 714.2 L857.0 713.7 L860.9 713.2 L864.8 712.8 L868.8 712.4 L872.7 712.1 L876.7 711.9 L880.7 711.7 L884.7 711.6 L888.7 711.6 L892.7 711.6 L896.8 711.7 L900.8 711.8 L904.8 712.0 L908.8 712.2 L912.9 712.5 L916.9 712.9 L920.9 713.3 L924.9 713.8 L928.9 714.3 L932.9 714.9 L936.8 715.6 L940.8 716.3 L944.7 717.1 L948.6 717.9 L952.5 718.8 L956.3 719.8 L960.1 720.8 L963.9 721.8 L967.7 722.9 L971.4 724.1 L975.1 725.3 L978.7 726.6 L982.3 727.9 L985.9 729.3 L989.4 730.7 L992.8 732.2 L996.2 733.7 L999.6 735.3 L1002.9 736.9 L1006.1 738.6 L1009.3 740.4 L1012.4 742.1 L1015.5 744.0 L1018.5 745.8 L1021.4 747.7 L1024.2 749.7 L1027.0 751.7 L1029.7 753.7 L1032.3 755.8 L1034.9 757.9 L1037.3 760.1ZM1045.8 760.4 L1048.2 762.7 L1050.6 765.1 L1052.8 767.4 L1054.9 769.9 L1057.0 772.3 L1058.9 774.8 L1060.8 777.3 L1062.5 779.9 L1064.2 782.4 L1065.7 785.0 L1067.2 787.7 L1068.5 790.3 L1069.7 793.0 L1070.8 795.6 L1071.8 798.3 L1072.7 801.1 L1073.5 803.8 L1074.2 806.5 L1074.7 809.3 L1075.1 812.0 L1075.5 814.8 L1075.7 817.5 L1075.7 820.3 L1075.7 823.1 L1075.5 825.8 L1075.2 828.6 L1074.8 831.4 L1074.3 834.1 L1073.6 836.9 L1072.8 839.6 L1071.9 842.3 L1070.9 845.0 L1069.7 847.7 L1068.5 850.3 L1067.1 853.0 L1065.5 855.6 L1063.9 858.2 L1062.1 860.7 L1060.2 863.2 L1058.2 865.7 L1056.1 868.2 L1053.9 870.6 L1051.5 873.0 L1049.0 875.3 L1046.4 877.6 L1043.7 879.9 L1040.9 882.1 L1038.0 884.2 L1035.0 886.3 L1031.8 888.4 L1028.6 890.4 L1025.2 892.3 L1021.8 894.2 L1018.3 896.0 L1014.6 897.7 L1010.9 899.4 L1007.1 901.1 L1003.2 902.6 L999.2 904.1 L995.1 905.5 L991.0 906.9 L986.8 908.1 L982.5 909.3 L978.2 910.5 L973.8 911.5 L969.3 912.5 L964.8 913.4 L960.2 914.2 L955.6 914.9 L950.9 915.6 L946.2 916.1 L941.4 916.6 L936.7 917.0 L931.9 917.4 L927.0 917.6 L922.2 917.7 L917.3 917.8 L912.4 917.8 L907.5 917.7 L902.7 917.5 L897.8 917.3 L892.9 916.9 L888.0 916.5 L883.1 916.0 L878.3 915.4 L873.5 914.7 L868.7 913.9 L863.9 913.1 L859.2 912.2 L854.5 911.2 L849.8 910.1 L845.2 909.0 L840.7 907.8 L836.2 906.5 L831.7 905.1 L827.3 903.7 L823.0 902.1 L818.7 900.6 L814.5 898.9 L810.4 897.2 L806.4 895.4 L802.4 893.6 L798.5 891.7 L794.7 889.8 L791.0 887.7 L787.4 885.7 L783.9 883.6 L780.4 881.4 L777.1 879.2 L773.9 876.9 L770.8 874.6 L767.7 872.3 L764.8 869.9 L762.0 867.4 L759.3 865.0 L756.7 862.5 L754.2 859.9 L751.9 857.4 L749.6 854.8 L747.5 852.2 L745.5 849.5 L743.6 846.8 L741.8 844.2 L740.1 841.5 L738.6 838.7 L737.2 836.0 L735.9 833.3 L734.7 830.5 L733.7 827.8 L732.7 825.0 L731.9 822.2 L731.2 819.5 L730.6 816.7 L730.2 813.9 L729.8 811.2 L729.6 808.4 L729.5 805.7 L729.6 803.0 L729.7 800.2 L729.9 797.5 L730.3 794.8 L730.8 792.2 L731.4 789.5 L732.1 786.9 L732.9 784.3 L733.9 781.7 L734.9 779.1 L736.1 776.6 L737.3 774.1 L738.7 771.6 L740.2 769.1 L741.7 766.7 L743.4 764.3 L745.2 762.0 L747.1 759.7 L749.0 757.4 L751.1 755.2 L753.2 753.0 L755.5 750.8 L757.8 748.7 L760.2 746.7 L762.7 744.6 L765.3 742.7 L768.0 740.7 L770.7 738.9 L773.5 737.0 L776.4 735.2 L779.4 733.5 L782.5 731.8 L785.6 730.2 L788.8 728.6 L792.0 727.1 L795.3 725.6 L798.7 724.2 L802.1 722.8 L805.6 721.5 L809.1 720.3 L812.7 719.1 L816.4 717.9 L820.1 716.9 L823.8 715.8 L827.6 714.9 L831.4 714.0 L835.3 713.1 L839.2 712.3 L843.1 711.6 L847.1 710.9 L851.1 710.3 L855.1 709.8 L859.2 709.3 L863.3 708.9 L867.4 708.5 L871.5 708.2 L875.7 708.0 L879.8 707.8 L884.0 707.7 L888.2 707.6 L892.4 707.6 L896.5 707.7 L900.7 707.9 L904.9 708.0 L909.1 708.3 L913.3 708.6 L917.5 709.0 L921.7 709.4 L925.9 709.9 L930.1 710.5 L934.2 711.1 L938.3 711.8 L942.4 712.6 L946.5 713.4 L950.6 714.2 L954.6 715.1 L958.7 716.1 L962.6 717.2 L966.6 718.3 L970.5 719.4 L974.4 720.6 L978.2 721.9 L982.0 723.2 L985.8 724.6 L989.5 726.0 L993.2 727.5 L996.8 729.1 L1000.3 730.7 L1003.8 732.3 L1007.3 734.0 L1010.7 735.8 L1014.0 737.6 L1017.2 739.4 L1020.4 741.3 L1023.5 743.3 L1026.6 745.2 L1029.6 747.3 L1032.5 749.4 L1035.3 751.5 L1038.1 753.6 L1040.7 755.8 L1043.3 758.1ZM1051.9 758.5 L1054.4 760.9 L1056.9 763.4 L1059.2 765.9 L1061.4 768.4 L1063.6 770.9 L1065.6 773.5 L1067.6 776.2 L1069.4 778.8 L1071.1 781.5 L1072.8 784.2 L1074.3 786.9 L1075.7 789.7 L1077.0 792.5 L1078.2 795.3 L1079.2 798.1 L1080.2 800.9 L1081.0 803.7 L1081.7 806.6 L1082.3 809.5 L1082.8 812.3 L1083.1 815.2 L1083.3 818.1 L1083.4 821.0 L1083.4 823.9 L1083.2 826.8 L1082.9 829.7 L1082.5 832.6 L1082.0 835.4 L1081.3 838.3 L1080.5 841.1 L1079.6 844.0 L1078.5 846.8 L1077.3 849.6 L1076.0 852.4 L1074.5 855.1 L1073.0 857.9 L1071.3 860.6 L1069.4 863.3 L1067.5 865.9 L1065.4 868.5 L1063.2 871.1 L1060.8 873.6 L1058.4 876.1 L1055.8 878.6 L1053.1 881.0 L1050.3 883.3 L1047.3 885.6 L1044.3 887.9 L1041.1 890.1 L1037.9 892.2 L1034.5 894.3 L1031.0 896.4 L1027.4 898.3 L1023.7 900.2 L1019.9 902.1 L1016.0 903.9 L1012.0 905.6 L1007.9 907.2 L1003.8 908.8 L999.5 910.3 L995.2 911.7 L990.8 913.0 L986.3 914.3 L981.8 915.4 L977.2 916.5 L972.5 917.6 L967.7 918.5 L963.0 919.4 L958.1 920.1 L953.2 920.8 L948.3 921.4 L943.3 921.9 L938.3 922.4 L933.3 922.7 L928.2 922.9 L923.2 923.1 L918.1 923.2 L912.9 923.2 L907.8 923.1 L902.7 922.9 L897.6 922.6 L892.5 922.2 L887.4 921.8 L882.3 921.2 L877.2 920.6 L872.2 919.9 L867.1 919.1 L862.1 918.2 L857.2 917.3 L852.3 916.2 L847.4 915.1 L842.6 913.9 L837.8 912.6 L833.1 911.2 L828.4 909.8 L823.8 908.3 L819.3 906.7 L814.8 905.0 L810.5 903.3 L806.1 901.5 L801.9 899.7 L797.8 897.7 L793.7 895.8 L789.8 893.7 L785.9 891.6 L782.1 889.4 L778.4 887.2 L774.9 884.9 L771.4 882.6 L768.0 880.2 L764.7 877.8 L761.6 875.4 L758.6 872.8 L755.6 870.3 L752.8 867.7 L750.1 865.1 L747.5 862.4 L745.1 859.8 L742.7 857.0 L740.5 854.3 L738.4 851.5 L736.5 848.7 L734.6 845.9 L732.9 843.1 L731.3 840.3 L729.8 837.4 L728.5 834.5 L727.3 831.7 L726.2 828.8 L725.2 825.9 L724.4 823.0 L723.7 820.1 L723.1 817.2 L722.6 814.3 L722.3 811.5 L722.1 808.6 L722.0 805.7 L722.1 802.9 L722.2 800.0 L722.5 797.2 L722.9 794.4 L723.4 791.6 L724.1 788.8 L724.8 786.1 L725.7 783.4 L726.7 780.7 L727.8 778.0 L729.0 775.4 L730.3 772.8 L731.8 770.2 L733.3 767.6 L735.0 765.1 L736.7 762.6 L738.6 760.2 L740.5 757.8 L742.6 755.4 L744.8 753.1 L747.0 750.8 L749.4 748.6 L751.8 746.4 L754.3 744.2 L756.9 742.1 L759.6 740.1 L762.4 738.1 L765.3 736.1 L768.2 734.2 L771.3 732.4 L774.4 730.6 L777.6 728.8 L780.8 727.1 L784.1 725.5 L787.5 723.9 L791.0 722.4 L794.5 720.9 L798.0 719.5 L801.7 718.1 L805.4 716.8 L809.1 715.6 L812.9 714.4 L816.8 713.3 L820.7 712.2 L824.6 711.2 L828.6 710.3 L832.6 709.4 L836.7 708.6 L840.8 707.8 L844.9 707.1 L849.1 706.5 L853.3 705.9 L857.5 705.4 L861.7 705.0 L866.0 704.6 L870.3 704.3 L874.6 704.1 L878.9 703.9 L883.3 703.8 L887.6 703.7 L892.0 703.7 L896.3 703.8 L900.7 703.9 L905.1 704.1 L909.4 704.4 L913.8 704.7 L918.2 705.1 L922.5 705.6 L926.9 706.1 L931.2 706.7 L935.5 707.3 L939.8 708.0 L944.1 708.8 L948.4 709.7 L952.6 710.5 L956.8 711.5 L961.0 712.5 L965.1 713.6 L969.2 714.7 L973.3 715.9 L977.4 717.2 L981.4 718.5 L985.3 719.9 L989.2 721.3 L993.1 722.8 L996.9 724.4 L1000.7 726.0 L1004.4 727.6 L1008.0 729.3 L1011.6 731.1 L1015.2 732.9 L1018.6 734.8 L1022.0 736.7 L1025.4 738.7 L1028.6 740.7 L1031.8 742.8 L1034.9 744.9 L1038.0 747.0 L1040.9 749.2 L1043.8 751.5 L1046.6 753.8 L1049.3 756.1ZM1058.0 756.6 L1060.6 759.1 L1063.1 761.7 L1065.6 764.3 L1067.9 766.9 L1070.2 769.6 L1072.3 772.3 L1074.4 775.0 L1076.3 777.8 L1078.1 780.5 L1079.8 783.4 L1081.4 786.2 L1082.9 789.1 L1084.2 792.0 L1085.5 794.9 L1086.6 797.8 L1087.6 800.7 L1088.5 803.7 L1089.2 806.7 L1089.9 809.7 L1090.4 812.7 L1090.7 815.7 L1091.0 818.7 L1091.1 821.7 L1091.1 824.7 L1090.9 827.7 L1090.7 830.7 L1090.2 833.7 L1089.7 836.7 L1089.0 839.7 L1088.2 842.7 L1087.2 845.7 L1086.1 848.6 L1084.9 851.5 L1083.5 854.4 L1082.1 857.3 L1080.4 860.2 L1078.7 863.0 L1076.8 865.8 L1074.7 868.6 L1072.6 871.3 L1070.3 874.0 L1067.8 876.6 L1065.3 879.3 L1062.6 881.8 L1059.8 884.3 L1056.9 886.8 L1053.8 889.2 L1050.6 891.6 L1047.3 893.9 L1043.9 896.2 L1040.4 898.3 L1036.8 900.5 L1033.0 902.5 L1029.2 904.5 L1025.2 906.5 L1021.1 908.3 L1017.0 910.1 L1012.7 911.8 L1008.4 913.5 L1004.0 915.0 L999.4 916.5 L994.8 917.9 L990.2 919.2 L985.4 920.5 L980.6 921.6 L975.7 922.7 L970.8 923.7 L965.7 924.6 L960.7 925.4 L955.6 926.1 L950.4 926.7 L945.2 927.3 L940.0 927.7 L934.7 928.1 L929.4 928.3 L924.1 928.5 L918.8 928.6 L913.5 928.6 L908.1 928.5 L902.8 928.3 L897.4 928.0 L892.1 927.6 L886.7 927.1 L881.4 926.5 L876.1 925.9 L870.8 925.1 L865.6 924.3 L860.3 923.4 L855.2 922.4 L850.0 921.3 L844.9 920.1 L839.9 918.8 L834.9 917.5 L830.0 916.1 L825.1 914.5 L820.3 913.0 L815.6 911.3 L810.9 909.6 L806.4 907.8 L801.9 905.9 L797.5 903.9 L793.1 901.9 L788.9 899.8 L784.8 897.7 L780.7 895.5 L776.8 893.2 L773.0 890.9 L769.2 888.5 L765.6 886.1 L762.1 883.6 L758.7 881.0 L755.4 878.5 L752.3 875.8 L749.2 873.2 L746.3 870.5 L743.5 867.7 L740.8 865.0 L738.3 862.1 L735.8 859.3 L733.5 856.4 L731.4 853.6 L729.3 850.6 L727.4 847.7 L725.7 844.8 L724.0 841.8 L722.5 838.8 L721.1 835.8 L719.9 832.8 L718.7 829.8 L717.7 826.8 L716.9 823.8 L716.2 820.8 L715.6 817.8 L715.1 814.8 L714.8 811.7 L714.6 808.8 L714.5 805.8 L714.6 802.8 L714.8 799.8 L715.1 796.9 L715.5 794.0 L716.1 791.1 L716.7 788.2 L717.5 785.3 L718.5 782.5 L719.5 779.7 L720.7 776.9 L722.0 774.2 L723.4 771.4 L724.9 768.8 L726.5 766.1 L728.2 763.5 L730.1 760.9 L732.0 758.4 L734.1 755.9 L736.2 753.4 L738.5 751.0 L740.8 748.7 L743.3 746.3 L745.8 744.1 L748.4 741.8 L751.2 739.6 L754.0 737.5 L756.9 735.4 L759.9 733.4 L763.0 731.4 L766.1 729.5 L769.4 727.6 L772.7 725.8 L776.0 724.1 L779.5 722.4 L783.0 720.7 L786.6 719.1 L790.3 717.6 L794.0 716.1 L797.8 714.7 L801.6 713.4 L805.5 712.1 L809.5 710.9 L813.5 709.7 L817.5 708.6 L821.6 707.6 L825.7 706.6 L829.9 705.7 L834.2 704.9 L838.4 704.1 L842.7 703.4 L847.0 702.7 L851.4 702.1 L855.8 701.6 L860.2 701.1 L864.6 700.8 L869.1 700.4 L873.6 700.2 L878.1 700.0 L882.6 699.9 L887.1 699.8 L891.6 699.8 L896.1 699.9 L900.7 700.0 L905.2 700.3 L909.8 700.5 L914.3 700.9 L918.8 701.3 L923.3 701.8 L927.8 702.3 L932.3 702.9 L936.8 703.6 L941.3 704.3 L945.7 705.1 L950.2 706.0 L954.6 706.9 L958.9 707.9 L963.3 708.9 L967.6 710.1 L971.9 711.2 L976.1 712.5 L980.3 713.8 L984.5 715.1 L988.6 716.6 L992.7 718.1 L996.7 719.6 L1000.7 721.2 L1004.6 722.9 L1008.4 724.6 L1012.2 726.4 L1016.0 728.2 L1019.6 730.1 L1023.3 732.0 L1026.8 734.0 L1030.3 736.1 L1033.7 738.2 L1037.0 740.3 L1040.2 742.5 L1043.4 744.7 L1046.5 747.0 L1049.5 749.4 L1052.4 751.7 L1055.2 754.2Z" fill="none" stroke="#6a8a20" stroke-width="3.4" stroke-opacity="0.8"/>
<path d="M1002.8 773.6 L1004.4 775.3 L1006.0 776.9 L1007.5 778.6 L1009.0 780.3 L1010.3 782.1 L1011.6 783.8 L1012.9 785.6 L1014.0 787.4 L1015.1 789.2 L1016.1 791.0 L1017.1 792.8 L1017.9 794.7 L1018.7 796.5 L1019.4 798.4 L1020.0 800.3 L1020.6 802.2 L1021.1 804.1 L1021.4 806.0 L1021.8 807.9 L1022.0 809.8 L1022.1 811.7 L1022.2 813.6 L1022.2 815.5 L1022.1 817.4 L1021.9 819.3 L1021.6 821.2 L1021.2 823.1 L1020.8 825.0 L1020.3 826.9 L1019.6 828.8 L1019.0 830.6 L1018.2 832.5 L1017.3 834.3 L1016.4 836.1 L1015.3 837.9 L1014.2 839.7 L1013.0 841.4 L1011.8 843.1 L1010.4 844.9 L1009.0 846.5 L1007.5 848.2 L1005.9 849.8 L1004.2 851.4 L1002.4 853.0 L1000.6 854.6 L998.7 856.1 L996.8 857.6 L994.7 859.0 L992.6 860.4 L990.4 861.8 L988.2 863.1 L985.9 864.4 L983.5 865.7 L981.0 866.9 L978.5 868.0 L976.0 869.2 L973.4 870.2 L970.7 871.3 L967.9 872.3 L965.2 873.2 L962.3 874.1 L959.5 875.0 L956.5 875.8 L953.6 876.5 L950.6 877.2 L947.5 877.8 L944.5 878.4 L941.3 879.0 L938.2 879.5 L935.0 879.9 L931.8 880.3 L928.6 880.6 L925.4 880.9 L922.1 881.1 L918.8 881.2 L915.6 881.3 L912.3 881.4 L909.0 881.4 L905.6 881.3 L902.3 881.2 L899.0 881.0 L895.7 880.8 L892.4 880.5 L889.1 880.1 L885.8 879.8 L882.5 879.3 L879.3 878.8 L876.0 878.3 L872.8 877.6 L869.6 877.0 L866.5 876.3 L863.3 875.5 L860.2 874.7 L857.1 873.8 L854.1 872.9 L851.1 872.0 L848.1 871.0 L845.2 869.9 L842.4 868.8 L839.5 867.7 L836.8 866.5 L834.0 865.3 L831.4 864.0 L828.7 862.7 L826.2 861.4 L823.7 860.0 L821.2 858.6 L818.9 857.1 L816.5 855.6 L814.3 854.1 L812.1 852.5 L810.0 851.0 L807.9 849.3 L806.0 847.7 L804.1 846.0 L802.2 844.3 L800.5 842.6 L798.8 840.9 L797.2 839.1 L795.7 837.3 L794.2 835.5 L792.9 833.7 L791.6 831.9 L790.4 830.0 L789.2 828.2 L788.2 826.3 L787.2 824.4 L786.3 822.6 L785.5 820.7 L784.8 818.8 L784.2 816.8 L783.6 814.9 L783.1 813.0 L782.8 811.1 L782.5 809.2 L782.2 807.3 L782.1 805.4 L782.0 803.5 L782.1 801.6 L782.2 799.7 L782.4 797.8 L782.6 796.0 L783.0 794.1 L783.4 792.3 L783.9 790.4 L784.5 788.6 L785.2 786.8 L785.9 785.0 L786.7 783.3 L787.6 781.5 L788.6 779.8 L789.6 778.1 L790.7 776.4 L791.9 774.8 L793.2 773.1 L794.5 771.5 L795.9 769.9 L797.3 768.4 L798.9 766.8 L800.5 765.3 L802.1 763.9 L803.8 762.4 L805.6 761.0 L807.4 759.6 L809.3 758.3 L811.3 757.0 L813.3 755.7 L815.4 754.5 L817.5 753.2 L819.6 752.1 L821.9 750.9 L824.1 749.8 L826.4 748.8 L828.8 747.8 L831.2 746.8 L833.7 745.8 L836.2 744.9 L838.7 744.1 L841.2 743.2 L843.8 742.5 L846.5 741.7 L849.2 741.0 L851.9 740.4 L854.6 739.8 L857.4 739.2 L860.1 738.7 L863.0 738.2 L865.8 737.7 L868.6 737.4 L871.5 737.0 L874.4 736.7 L877.3 736.4 L880.3 736.2 L883.2 736.0 L886.1 735.9 L889.1 735.8 L892.1 735.8 L895.0 735.8 L898.0 735.9 L901.0 735.9 L904.0 736.1 L907.0 736.3 L909.9 736.5 L912.9 736.8 L915.9 737.1 L918.8 737.5 L921.8 737.9 L924.7 738.3 L927.7 738.8 L930.6 739.4 L933.5 739.9 L936.4 740.6 L939.2 741.2 L942.0 741.9 L944.9 742.7 L947.6 743.5 L950.4 744.3 L953.1 745.2 L955.8 746.1 L958.5 747.1 L961.2 748.1 L963.8 749.1 L966.3 750.2 L968.9 751.3 L971.3 752.4 L973.8 753.6 L976.2 754.8 L978.5 756.1 L980.9 757.4 L983.1 758.7 L985.3 760.0 L987.5 761.4 L989.6 762.9 L991.7 764.3 L993.7 765.8 L995.6 767.3 L997.5 768.8 L999.3 770.4 L1001.1 772.0ZM1009.0 771.7 L1010.7 773.4 L1012.4 775.2 L1014.0 777.0 L1015.6 778.8 L1017.0 780.7 L1018.4 782.5 L1019.7 784.4 L1021.0 786.3 L1022.1 788.2 L1023.2 790.1 L1024.2 792.1 L1025.2 794.1 L1026.0 796.0 L1026.8 798.0 L1027.4 800.0 L1028.0 802.0 L1028.6 804.0 L1029.0 806.1 L1029.3 808.1 L1029.6 810.1 L1029.7 812.1 L1029.8 814.2 L1029.8 816.2 L1029.7 818.2 L1029.5 820.3 L1029.2 822.3 L1028.8 824.3 L1028.4 826.3 L1027.8 828.3 L1027.2 830.3 L1026.5 832.3 L1025.7 834.2 L1024.7 836.2 L1023.7 838.1 L1022.7 840.0 L1021.5 841.9 L1020.2 843.8 L1018.9 845.6 L1017.4 847.5 L1015.9 849.2 L1014.3 851.0 L1012.6 852.8 L1010.9 854.5 L1009.0 856.2 L1007.1 857.8 L1005.1 859.4 L1003.0 861.0 L1000.8 862.5 L998.6 864.1 L996.2 865.5 L993.9 866.9 L991.4 868.3 L988.9 869.7 L986.3 871.0 L983.6 872.2 L980.9 873.4 L978.1 874.6 L975.2 875.7 L972.3 876.7 L969.4 877.7 L966.4 878.7 L963.3 879.6 L960.2 880.5 L957.0 881.3 L953.8 882.0 L950.6 882.7 L947.3 883.3 L944.0 883.9 L940.6 884.4 L937.3 884.9 L933.8 885.3 L930.4 885.6 L927.0 885.9 L923.5 886.1 L920.0 886.3 L916.5 886.4 L913.0 886.5 L909.4 886.5 L905.9 886.4 L902.4 886.3 L898.8 886.1 L895.3 885.8 L891.8 885.5 L888.3 885.2 L884.8 884.7 L881.3 884.3 L877.8 883.7 L874.3 883.1 L870.9 882.5 L867.5 881.8 L864.1 881.0 L860.8 880.2 L857.5 879.3 L854.2 878.4 L851.0 877.4 L847.8 876.4 L844.6 875.3 L841.5 874.2 L838.5 873.0 L835.4 871.8 L832.5 870.6 L829.6 869.3 L826.7 867.9 L824.0 866.5 L821.2 865.1 L818.6 863.6 L816.0 862.1 L813.4 860.5 L811.0 858.9 L808.6 857.3 L806.3 855.6 L804.0 854.0 L801.9 852.2 L799.8 850.5 L797.7 848.7 L795.8 846.9 L793.9 845.1 L792.2 843.2 L790.5 841.3 L788.8 839.4 L787.3 837.5 L785.9 835.6 L784.5 833.6 L783.2 831.7 L782.0 829.7 L780.9 827.7 L779.9 825.7 L779.0 823.7 L778.1 821.7 L777.4 819.6 L776.7 817.6 L776.2 815.6 L775.7 813.6 L775.3 811.5 L774.9 809.5 L774.7 807.5 L774.6 805.4 L774.5 803.4 L774.6 801.4 L774.7 799.4 L774.9 797.4 L775.2 795.4 L775.6 793.5 L776.1 791.5 L776.6 789.6 L777.2 787.6 L777.9 785.7 L778.7 783.8 L779.6 782.0 L780.6 780.1 L781.6 778.3 L782.7 776.5 L783.9 774.7 L785.2 772.9 L786.5 771.2 L787.9 769.5 L789.4 767.8 L791.0 766.1 L792.6 764.5 L794.3 762.9 L796.1 761.4 L797.9 759.9 L799.8 758.4 L801.7 756.9 L803.7 755.5 L805.8 754.1 L808.0 752.7 L810.2 751.4 L812.4 750.1 L814.7 748.9 L817.1 747.7 L819.5 746.5 L821.9 745.4 L824.4 744.3 L827.0 743.3 L829.6 742.3 L832.2 741.3 L834.9 740.4 L837.6 739.6 L840.4 738.7 L843.2 738.0 L846.0 737.2 L848.9 736.5 L851.8 735.9 L854.7 735.3 L857.7 734.7 L860.6 734.2 L863.7 733.8 L866.7 733.3 L869.7 733.0 L872.8 732.6 L875.9 732.4 L879.0 732.1 L882.1 732.0 L885.2 731.8 L888.4 731.7 L891.5 731.7 L894.6 731.7 L897.8 731.8 L901.0 731.9 L904.1 732.0 L907.3 732.2 L910.4 732.4 L913.6 732.7 L916.7 733.1 L919.9 733.5 L923.0 733.9 L926.1 734.4 L929.2 734.9 L932.3 735.5 L935.4 736.1 L938.4 736.7 L941.5 737.4 L944.5 738.2 L947.4 739.0 L950.4 739.8 L953.3 740.7 L956.2 741.6 L959.1 742.6 L961.9 743.6 L964.7 744.7 L967.5 745.8 L970.2 746.9 L972.9 748.1 L975.5 749.3 L978.1 750.5 L980.7 751.8 L983.2 753.1 L985.7 754.5 L988.1 755.9 L990.4 757.3 L992.7 758.8 L995.0 760.3 L997.1 761.8 L999.3 763.4 L1001.3 765.0 L1003.4 766.6 L1005.3 768.3 L1007.2 770.0ZM1015.2 769.8 L1017.0 771.6 L1018.8 773.5 L1020.5 775.4 L1022.2 777.3 L1023.7 779.3 L1025.2 781.2 L1026.6 783.2 L1027.9 785.2 L1029.2 787.2 L1030.3 789.3 L1031.4 791.4 L1032.4 793.4 L1033.3 795.5 L1034.1 797.6 L1034.9 799.7 L1035.5 801.9 L1036.0 804.0 L1036.5 806.1 L1036.9 808.3 L1037.2 810.4 L1037.3 812.6 L1037.4 814.7 L1037.4 816.9 L1037.3 819.0 L1037.1 821.2 L1036.9 823.3 L1036.5 825.5 L1036.0 827.6 L1035.4 829.7 L1034.8 831.8 L1034.0 833.9 L1033.1 836.0 L1032.2 838.1 L1031.1 840.1 L1030.0 842.2 L1028.8 844.2 L1027.4 846.2 L1026.0 848.1 L1024.5 850.1 L1022.9 852.0 L1021.2 853.9 L1019.4 855.7 L1017.6 857.5 L1015.6 859.3 L1013.6 861.1 L1011.4 862.8 L1009.2 864.5 L1006.9 866.1 L1004.5 867.7 L1002.1 869.3 L999.6 870.8 L997.0 872.3 L994.3 873.7 L991.5 875.1 L988.7 876.4 L985.8 877.7 L982.8 878.9 L979.8 880.1 L976.7 881.2 L973.6 882.3 L970.4 883.3 L967.1 884.3 L963.8 885.2 L960.5 886.0 L957.1 886.8 L953.6 887.6 L950.2 888.2 L946.6 888.9 L943.1 889.4 L939.5 889.9 L935.9 890.3 L932.2 890.7 L928.5 891.0 L924.9 891.2 L921.1 891.4 L917.4 891.5 L913.7 891.6 L909.9 891.6 L906.2 891.5 L902.4 891.4 L898.7 891.2 L894.9 890.9 L891.2 890.6 L887.4 890.2 L883.7 889.8 L880.0 889.2 L876.3 888.7 L872.6 888.0 L869.0 887.4 L865.4 886.6 L861.8 885.8 L858.2 884.9 L854.7 884.0 L851.2 883.0 L847.8 882.0 L844.4 880.9 L841.1 879.7 L837.8 878.5 L834.5 877.3 L831.3 876.0 L828.2 874.7 L825.1 873.3 L822.1 871.8 L819.1 870.3 L816.3 868.8 L813.4 867.2 L810.7 865.6 L808.0 864.0 L805.4 862.3 L802.9 860.5 L800.4 858.8 L798.0 857.0 L795.7 855.1 L793.5 853.3 L791.4 851.4 L789.3 849.5 L787.4 847.5 L785.5 845.5 L783.7 843.6 L782.0 841.5 L780.4 839.5 L778.9 837.4 L777.4 835.4 L776.1 833.3 L774.8 831.2 L773.7 829.1 L772.6 827.0 L771.6 824.8 L770.8 822.7 L770.0 820.5 L769.3 818.4 L768.7 816.2 L768.2 814.1 L767.8 811.9 L767.4 809.8 L767.2 807.6 L767.1 805.5 L767.0 803.3 L767.1 801.2 L767.2 799.1 L767.5 797.0 L767.8 794.9 L768.2 792.8 L768.7 790.7 L769.3 788.7 L770.0 786.6 L770.7 784.6 L771.6 782.6 L772.5 780.6 L773.6 778.7 L774.7 776.7 L775.9 774.8 L777.1 772.9 L778.5 771.1 L779.9 769.3 L781.4 767.4 L783.0 765.7 L784.6 763.9 L786.4 762.2 L788.2 760.5 L790.0 758.9 L792.0 757.3 L794.0 755.7 L796.0 754.2 L798.2 752.7 L800.4 751.2 L802.7 749.8 L805.0 748.4 L807.4 747.1 L809.8 745.7 L812.3 744.5 L814.8 743.3 L817.4 742.1 L820.1 740.9 L822.8 739.8 L825.5 738.8 L828.3 737.8 L831.2 736.8 L834.0 735.9 L837.0 735.0 L839.9 734.2 L842.9 733.4 L845.9 732.7 L849.0 732.0 L852.1 731.4 L855.2 730.8 L858.4 730.3 L861.5 729.8 L864.7 729.4 L867.9 729.0 L871.2 728.6 L874.4 728.3 L877.7 728.1 L881.0 727.9 L884.3 727.8 L887.6 727.7 L890.9 727.6 L894.3 727.6 L897.6 727.7 L900.9 727.8 L904.3 728.0 L907.6 728.2 L910.9 728.4 L914.3 728.7 L917.6 729.1 L920.9 729.5 L924.2 729.9 L927.5 730.4 L930.8 731.0 L934.0 731.6 L937.3 732.2 L940.5 732.9 L943.7 733.7 L946.9 734.5 L950.0 735.3 L953.1 736.2 L956.2 737.1 L959.3 738.1 L962.3 739.1 L965.3 740.2 L968.3 741.3 L971.2 742.4 L974.1 743.6 L976.9 744.9 L979.7 746.1 L982.5 747.5 L985.2 748.8 L987.8 750.2 L990.4 751.6 L993.0 753.1 L995.5 754.6 L997.9 756.2 L1000.3 757.8 L1002.6 759.4 L1004.9 761.0 L1007.1 762.7 L1009.2 764.5 L1011.3 766.2 L1013.2 768.0ZM1021.3 767.9 L1023.3 769.8 L1025.2 771.8 L1027.0 773.8 L1028.7 775.8 L1030.4 777.9 L1032.0 779.9 L1033.5 782.0 L1034.9 784.1 L1036.2 786.3 L1037.4 788.4 L1038.6 790.6 L1039.6 792.8 L1040.6 795.0 L1041.5 797.2 L1042.3 799.5 L1042.9 801.7 L1043.5 804.0 L1044.0 806.2 L1044.4 808.5 L1044.7 810.7 L1045.0 813.0 L1045.1 815.3 L1045.1 817.6 L1045.0 819.8 L1044.8 822.1 L1044.5 824.4 L1044.1 826.6 L1043.6 828.9 L1043.0 831.1 L1042.3 833.4 L1041.5 835.6 L1040.7 837.8 L1039.7 840.0 L1038.6 842.2 L1037.4 844.3 L1036.1 846.4 L1034.7 848.5 L1033.2 850.6 L1031.6 852.7 L1029.9 854.7 L1028.1 856.7 L1026.3 858.7 L1024.3 860.6 L1022.2 862.5 L1020.1 864.3 L1017.8 866.2 L1015.5 868.0 L1013.1 869.7 L1010.6 871.4 L1008.0 873.1 L1005.3 874.7 L1002.5 876.2 L999.7 877.7 L996.8 879.2 L993.8 880.6 L990.8 882.0 L987.6 883.3 L984.4 884.5 L981.2 885.7 L977.9 886.9 L974.5 888.0 L971.0 889.0 L967.5 890.0 L964.0 890.9 L960.4 891.7 L956.7 892.5 L953.0 893.2 L949.3 893.9 L945.5 894.4 L941.7 895.0 L937.9 895.4 L934.0 895.8 L930.1 896.1 L926.2 896.4 L922.3 896.6 L918.4 896.7 L914.4 896.8 L910.4 896.8 L906.4 896.7 L902.5 896.5 L898.5 896.3 L894.5 896.0 L890.5 895.7 L886.6 895.3 L882.6 894.8 L878.7 894.3 L874.8 893.7 L870.9 893.0 L867.1 892.3 L863.2 891.5 L859.4 890.6 L855.7 889.7 L851.9 888.7 L848.3 887.6 L844.6 886.5 L841.0 885.4 L837.5 884.2 L834.0 882.9 L830.6 881.6 L827.2 880.2 L823.9 878.8 L820.6 877.3 L817.4 875.8 L814.3 874.2 L811.3 872.5 L808.3 870.9 L805.4 869.2 L802.6 867.4 L799.8 865.6 L797.1 863.8 L794.5 861.9 L792.0 860.0 L789.6 858.1 L787.3 856.1 L785.0 854.1 L782.9 852.0 L780.8 850.0 L778.8 847.9 L776.9 845.8 L775.1 843.6 L773.5 841.5 L771.8 839.3 L770.3 837.1 L768.9 834.9 L767.6 832.7 L766.4 830.5 L765.3 828.2 L764.3 826.0 L763.4 823.7 L762.5 821.4 L761.8 819.2 L761.2 816.9 L760.7 814.6 L760.3 812.3 L759.9 810.1 L759.7 807.8 L759.6 805.5 L759.5 803.3 L759.6 801.0 L759.8 798.8 L760.0 796.6 L760.4 794.3 L760.8 792.1 L761.4 790.0 L762.0 787.8 L762.7 785.6 L763.6 783.5 L764.5 781.4 L765.5 779.3 L766.6 777.2 L767.7 775.2 L769.0 773.2 L770.3 771.2 L771.8 769.3 L773.3 767.3 L774.9 765.4 L776.6 763.6 L778.3 761.7 L780.1 759.9 L782.0 758.2 L784.0 756.4 L786.1 754.7 L788.2 753.1 L790.4 751.5 L792.6 749.9 L795.0 748.3 L797.4 746.8 L799.8 745.4 L802.3 744.0 L804.9 742.6 L807.5 741.3 L810.2 740.0 L813.0 738.7 L815.8 737.6 L818.6 736.4 L821.5 735.3 L824.5 734.2 L827.4 733.2 L830.5 732.3 L833.5 731.4 L836.7 730.5 L839.8 729.7 L843.0 728.9 L846.2 728.2 L849.5 727.5 L852.8 726.9 L856.1 726.4 L859.4 725.9 L862.8 725.4 L866.2 725.0 L869.6 724.6 L873.0 724.3 L876.5 724.1 L879.9 723.9 L883.4 723.7 L886.9 723.6 L890.4 723.6 L893.9 723.6 L897.4 723.6 L900.9 723.8 L904.4 723.9 L907.9 724.1 L911.4 724.4 L914.9 724.7 L918.4 725.1 L921.9 725.5 L925.4 726.0 L928.8 726.5 L932.3 727.1 L935.7 727.7 L939.1 728.4 L942.5 729.1 L945.9 729.9 L949.2 730.8 L952.6 731.6 L955.9 732.6 L959.1 733.5 L962.3 734.6 L965.5 735.6 L968.7 736.7 L971.8 737.9 L974.9 739.1 L977.9 740.4 L980.9 741.7 L983.9 743.0 L986.8 744.4 L989.6 745.8 L992.4 747.3 L995.2 748.8 L997.9 750.4 L1000.5 752.0 L1003.1 753.6 L1005.6 755.2 L1008.0 757.0 L1010.4 758.7 L1012.7 760.5 L1015.0 762.3 L1017.2 764.1 L1019.3 766.0ZM1027.5 766.0 L1029.6 768.0 L1031.6 770.1 L1033.5 772.2 L1035.3 774.3 L1037.1 776.5 L1038.7 778.7 L1040.3 780.9 L1041.8 783.1 L1043.2 785.3 L1044.5 787.6 L1045.7 789.9 L1046.9 792.2 L1047.9 794.5 L1048.8 796.8 L1049.7 799.2 L1050.4 801.5 L1051.0 803.9 L1051.6 806.3 L1052.0 808.7 L1052.3 811.1 L1052.6 813.5 L1052.7 815.9 L1052.7 818.3 L1052.6 820.7 L1052.5 823.1 L1052.2 825.4 L1051.8 827.8 L1051.3 830.2 L1050.7 832.6 L1049.9 834.9 L1049.1 837.3 L1048.2 839.6 L1047.2 841.9 L1046.0 844.2 L1044.8 846.5 L1043.4 848.7 L1042.0 850.9 L1040.4 853.1 L1038.7 855.3 L1037.0 857.4 L1035.1 859.6 L1033.1 861.6 L1031.1 863.7 L1028.9 865.7 L1026.6 867.6 L1024.3 869.6 L1021.8 871.5 L1019.3 873.3 L1016.6 875.1 L1013.9 876.9 L1011.1 878.6 L1008.2 880.2 L1005.2 881.8 L1002.1 883.4 L999.0 884.9 L995.7 886.3 L992.5 887.7 L989.1 889.0 L985.6 890.3 L982.1 891.5 L978.6 892.7 L974.9 893.7 L971.2 894.8 L967.5 895.7 L963.7 896.6 L959.8 897.4 L955.9 898.2 L952.0 898.9 L948.0 899.5 L944.0 900.1 L940.0 900.5 L935.9 901.0 L931.8 901.3 L927.6 901.6 L923.5 901.8 L919.3 901.9 L915.1 902.0 L910.9 902.0 L906.7 901.9 L902.5 901.7 L898.3 901.5 L894.1 901.2 L889.9 900.8 L885.7 900.4 L881.6 899.9 L877.4 899.3 L873.3 898.7 L869.2 898.0 L865.1 897.2 L861.1 896.3 L857.1 895.4 L853.1 894.4 L849.2 893.4 L845.3 892.3 L841.4 891.1 L837.6 889.9 L833.9 888.6 L830.2 887.3 L826.6 885.9 L823.0 884.4 L819.5 882.9 L816.1 881.3 L812.7 879.7 L809.5 878.0 L806.2 876.3 L803.1 874.6 L800.0 872.7 L797.1 870.9 L794.2 869.0 L791.4 867.0 L788.6 865.1 L786.0 863.0 L783.5 861.0 L781.0 858.9 L778.6 856.8 L776.4 854.6 L774.2 852.5 L772.1 850.3 L770.1 848.0 L768.3 845.8 L766.5 843.5 L764.8 841.2 L763.2 838.9 L761.8 836.5 L760.4 834.2 L759.1 831.8 L758.0 829.5 L756.9 827.1 L755.9 824.7 L755.1 822.3 L754.4 819.9 L753.7 817.5 L753.2 815.1 L752.7 812.7 L752.4 810.3 L752.2 807.9 L752.1 805.6 L752.0 803.2 L752.1 800.8 L752.3 798.5 L752.6 796.1 L753.0 793.8 L753.5 791.5 L754.0 789.2 L754.7 786.9 L755.5 784.6 L756.4 782.4 L757.4 780.2 L758.4 778.0 L759.6 775.8 L760.8 773.7 L762.2 771.6 L763.6 769.5 L765.1 767.4 L766.7 765.4 L768.4 763.4 L770.2 761.5 L772.0 759.5 L773.9 757.6 L775.9 755.8 L778.0 754.0 L780.2 752.2 L782.4 750.5 L784.7 748.8 L787.1 747.1 L789.6 745.5 L792.1 743.9 L794.7 742.4 L797.3 740.9 L800.0 739.5 L802.8 738.1 L805.6 736.7 L808.5 735.4 L811.5 734.2 L814.5 733.0 L817.5 731.8 L820.6 730.7 L823.7 729.7 L826.9 728.7 L830.2 727.7 L833.4 726.8 L836.7 725.9 L840.1 725.1 L843.5 724.4 L846.9 723.7 L850.3 723.1 L853.8 722.5 L857.3 721.9 L860.9 721.5 L864.4 721.0 L868.0 720.7 L871.6 720.3 L875.2 720.1 L878.8 719.9 L882.5 719.7 L886.1 719.6 L889.8 719.6 L893.5 719.6 L897.2 719.6 L900.9 719.7 L904.5 719.9 L908.2 720.1 L911.9 720.4 L915.6 720.8 L919.2 721.2 L922.9 721.6 L926.6 722.1 L930.2 722.6 L933.8 723.2 L937.4 723.9 L941.0 724.6 L944.6 725.4 L948.1 726.2 L951.6 727.1 L955.1 728.0 L958.6 729.0 L962.0 730.0 L965.4 731.0 L968.7 732.2 L972.1 733.3 L975.3 734.6 L978.6 735.8 L981.8 737.1 L984.9 738.5 L988.0 739.9 L991.1 741.4 L994.1 742.9 L997.0 744.4 L999.9 746.0 L1002.7 747.6 L1005.5 749.3 L1008.2 751.0 L1010.9 752.7 L1013.5 754.5 L1016.0 756.3 L1018.4 758.2 L1020.8 760.1 L1023.1 762.0 L1025.3 764.0ZM1033.6 764.1 L1035.8 766.3 L1037.9 768.4 L1039.9 770.6 L1041.9 772.8 L1043.7 775.1 L1045.5 777.4 L1047.1 779.7 L1048.7 782.0 L1050.2 784.4 L1051.6 786.7 L1052.9 789.1 L1054.1 791.6 L1055.2 794.0 L1056.2 796.4 L1057.1 798.9 L1057.8 801.4 L1058.5 803.9 L1059.1 806.4 L1059.6 808.9 L1059.9 811.4 L1060.2 813.9 L1060.3 816.4 L1060.4 818.9 L1060.3 821.5 L1060.1 824.0 L1059.8 826.5 L1059.4 829.0 L1058.9 831.5 L1058.3 834.0 L1057.6 836.5 L1056.7 838.9 L1055.7 841.4 L1054.7 843.8 L1053.5 846.2 L1052.2 848.6 L1050.8 851.0 L1049.2 853.3 L1047.6 855.6 L1045.9 857.9 L1044.0 860.2 L1042.1 862.4 L1040.0 864.6 L1037.8 866.8 L1035.6 868.9 L1033.2 871.0 L1030.7 873.0 L1028.1 875.0 L1025.5 876.9 L1022.7 878.8 L1019.8 880.7 L1016.9 882.5 L1013.8 884.2 L1010.7 885.9 L1007.5 887.6 L1004.2 889.1 L1000.8 890.7 L997.3 892.1 L993.8 893.5 L990.1 894.9 L986.4 896.1 L982.7 897.4 L978.9 898.5 L975.0 899.6 L971.0 900.6 L967.0 901.5 L963.0 902.4 L958.9 903.2 L954.7 904.0 L950.5 904.6 L946.3 905.2 L942.0 905.7 L937.7 906.1 L933.4 906.5 L929.0 906.8 L924.6 907.0 L920.3 907.2 L915.8 907.2 L911.4 907.2 L907.0 907.1 L902.6 907.0 L898.1 906.7 L893.7 906.4 L889.3 906.0 L884.9 905.6 L880.5 905.0 L876.1 904.4 L871.8 903.7 L867.4 903.0 L863.1 902.2 L858.9 901.3 L854.7 900.3 L850.5 899.3 L846.3 898.2 L842.2 897.0 L838.2 895.8 L834.2 894.5 L830.3 893.1 L826.4 891.7 L822.6 890.2 L818.8 888.7 L815.2 887.1 L811.6 885.4 L808.0 883.7 L804.6 881.9 L801.2 880.1 L797.9 878.2 L794.7 876.3 L791.6 874.4 L788.5 872.4 L785.6 870.3 L782.7 868.2 L779.9 866.1 L777.3 863.9 L774.7 861.7 L772.2 859.5 L769.8 857.2 L767.6 854.9 L765.4 852.6 L763.3 850.3 L761.4 847.9 L759.5 845.5 L757.8 843.1 L756.1 840.6 L754.6 838.2 L753.1 835.7 L751.8 833.2 L750.6 830.7 L749.5 828.2 L748.5 825.7 L747.6 823.2 L746.9 820.7 L746.2 818.2 L745.7 815.7 L745.2 813.1 L744.9 810.6 L744.7 808.1 L744.6 805.6 L744.5 803.1 L744.6 800.6 L744.9 798.2 L745.2 795.7 L745.6 793.2 L746.1 790.8 L746.7 788.4 L747.5 786.0 L748.3 783.6 L749.2 781.3 L750.3 779.0 L751.4 776.7 L752.6 774.4 L753.9 772.2 L755.3 769.9 L756.8 767.8 L758.4 765.6 L760.1 763.5 L761.9 761.4 L763.8 759.4 L765.7 757.3 L767.8 755.4 L769.9 753.4 L772.1 751.5 L774.4 749.7 L776.7 747.9 L779.1 746.1 L781.6 744.3 L784.2 742.7 L786.9 741.0 L789.6 739.4 L792.4 737.9 L795.2 736.4 L798.1 734.9 L801.1 733.5 L804.1 732.1 L807.2 730.8 L810.3 729.6 L813.5 728.4 L816.8 727.2 L820.1 726.1 L823.4 725.1 L826.8 724.1 L830.2 723.1 L833.7 722.2 L837.2 721.4 L840.7 720.6 L844.3 719.9 L847.9 719.2 L851.6 718.6 L855.2 718.0 L858.9 717.5 L862.7 717.1 L866.4 716.7 L870.2 716.4 L874.0 716.1 L877.8 715.9 L881.6 715.7 L885.4 715.6 L889.3 715.6 L893.1 715.6 L897.0 715.6 L900.8 715.8 L904.7 715.9 L908.5 716.2 L912.4 716.5 L916.2 716.8 L920.1 717.2 L923.9 717.7 L927.7 718.2 L931.5 718.8 L935.3 719.4 L939.1 720.1 L942.9 720.8 L946.6 721.6 L950.3 722.5 L954.0 723.4 L957.6 724.4 L961.3 725.4 L964.8 726.4 L968.4 727.6 L971.9 728.7 L975.4 730.0 L978.8 731.2 L982.2 732.5 L985.6 733.9 L988.9 735.3 L992.1 736.8 L995.3 738.3 L998.5 739.9 L1001.6 741.5 L1004.6 743.2 L1007.6 744.9 L1010.5 746.6 L1013.4 748.4 L1016.1 750.2 L1018.8 752.1 L1021.5 754.0 L1024.1 756.0 L1026.6 757.9 L1029.0 760.0 L1031.3 762.0ZM1039.7 762.2 L1042.0 764.5 L1044.2 766.7 L1046.4 769.0 L1048.4 771.4 L1050.4 773.7 L1052.2 776.1 L1054.0 778.5 L1055.6 780.9 L1057.2 783.4 L1058.7 785.9 L1060.0 788.4 L1061.3 790.9 L1062.4 793.5 L1063.5 796.0 L1064.4 798.6 L1065.3 801.2 L1066.0 803.8 L1066.6 806.4 L1067.1 809.1 L1067.5 811.7 L1067.8 814.3 L1068.0 817.0 L1068.1 819.6 L1068.0 822.3 L1067.8 824.9 L1067.5 827.6 L1067.1 830.2 L1066.6 832.8 L1065.9 835.4 L1065.2 838.0 L1064.3 840.6 L1063.3 843.2 L1062.2 845.7 L1061.0 848.3 L1059.6 850.8 L1058.1 853.3 L1056.6 855.7 L1054.9 858.2 L1053.0 860.6 L1051.1 863.0 L1049.1 865.3 L1046.9 867.6 L1044.7 869.9 L1042.3 872.1 L1039.8 874.3 L1037.2 876.4 L1034.5 878.5 L1031.7 880.6 L1028.8 882.6 L1025.8 884.5 L1022.7 886.4 L1019.5 888.2 L1016.2 890.0 L1012.8 891.8 L1009.4 893.4 L1005.8 895.0 L1002.2 896.6 L998.5 898.1 L994.7 899.5 L990.8 900.8 L986.8 902.1 L982.8 903.3 L978.7 904.4 L974.6 905.5 L970.4 906.5 L966.1 907.4 L961.8 908.3 L957.4 909.1 L953.0 909.7 L948.6 910.4 L944.1 910.9 L939.6 911.4 L935.0 911.8 L930.4 912.1 L925.8 912.3 L921.2 912.4 L916.6 912.5 L911.9 912.5 L907.3 912.4 L902.6 912.2 L898.0 912.0 L893.3 911.6 L888.7 911.2 L884.0 910.7 L879.4 910.2 L874.8 909.5 L870.2 908.8 L865.7 908.0 L861.2 907.2 L856.7 906.2 L852.3 905.2 L847.9 904.1 L843.5 902.9 L839.2 901.7 L835.0 900.4 L830.8 899.0 L826.6 897.6 L822.6 896.1 L818.6 894.5 L814.6 892.9 L810.8 891.2 L807.0 889.5 L803.3 887.7 L799.7 885.8 L796.1 883.9 L792.7 882.0 L789.3 879.9 L786.0 877.9 L782.8 875.8 L779.7 873.6 L776.7 871.4 L773.8 869.2 L771.1 866.9 L768.4 864.6 L765.8 862.2 L763.3 859.8 L760.9 857.4 L758.6 855.0 L756.5 852.5 L754.4 850.0 L752.5 847.5 L750.7 845.0 L749.0 842.4 L747.4 839.8 L745.9 837.2 L744.5 834.6 L743.3 832.0 L742.1 829.4 L741.1 826.7 L740.2 824.1 L739.4 821.5 L738.7 818.8 L738.1 816.2 L737.7 813.5 L737.4 810.9 L737.1 808.3 L737.0 805.6 L737.0 803.0 L737.2 800.4 L737.4 797.8 L737.7 795.3 L738.2 792.7 L738.8 790.2 L739.4 787.6 L740.2 785.1 L741.1 782.7 L742.1 780.2 L743.2 777.8 L744.4 775.4 L745.6 773.0 L747.0 770.6 L748.5 768.3 L750.1 766.0 L751.8 763.8 L753.6 761.6 L755.5 759.4 L757.4 757.3 L759.5 755.2 L761.6 753.1 L763.8 751.1 L766.1 749.1 L768.5 747.1 L771.0 745.3 L773.5 743.4 L776.2 741.6 L778.9 739.8 L781.6 738.1 L784.5 736.5 L787.4 734.8 L790.4 733.3 L793.4 731.7 L796.5 730.3 L799.7 728.9 L802.9 727.5 L806.2 726.2 L809.5 724.9 L812.9 723.7 L816.4 722.6 L819.9 721.5 L823.4 720.4 L827.0 719.5 L830.6 718.5 L834.3 717.7 L838.0 716.9 L841.8 716.1 L845.5 715.4 L849.3 714.8 L853.2 714.2 L857.0 713.7 L860.9 713.2 L864.8 712.8 L868.8 712.4 L872.7 712.1 L876.7 711.9 L880.7 711.7 L884.7 711.6 L888.7 711.6 L892.7 711.6 L896.8 711.7 L900.8 711.8 L904.8 712.0 L908.8 712.2 L912.9 712.5 L916.9 712.9 L920.9 713.3 L924.9 713.8 L928.9 714.3 L932.9 714.9 L936.8 715.6 L940.8 716.3 L944.7 717.1 L948.6 717.9 L952.5 718.8 L956.3 719.8 L960.1 720.8 L963.9 721.8 L967.7 722.9 L971.4 724.1 L975.1 725.3 L978.7 726.6 L982.3 727.9 L985.9 729.3 L989.4 730.7 L992.8 732.2 L996.2 733.7 L999.6 735.3 L1002.9 736.9 L1006.1 738.6 L1009.3 740.4 L1012.4 742.1 L1015.5 744.0 L1018.5 745.8 L1021.4 747.7 L1024.2 749.7 L1027.0 751.7 L1029.7 753.7 L1032.3 755.8 L1034.9 757.9 L1037.3 760.1ZM1045.8 760.4 L1048.2 762.7 L1050.6 765.1 L1052.8 767.4 L1054.9 769.9 L1057.0 772.3 L1058.9 774.8 L1060.8 777.3 L1062.5 779.9 L1064.2 782.4 L1065.7 785.0 L1067.2 787.7 L1068.5 790.3 L1069.7 793.0 L1070.8 795.6 L1071.8 798.3 L1072.7 801.1 L1073.5 803.8 L1074.2 806.5 L1074.7 809.3 L1075.1 812.0 L1075.5 814.8 L1075.7 817.5 L1075.7 820.3 L1075.7 823.1 L1075.5 825.8 L1075.2 828.6 L1074.8 831.4 L1074.3 834.1 L1073.6 836.9 L1072.8 839.6 L1071.9 842.3 L1070.9 845.0 L1069.7 847.7 L1068.5 850.3 L1067.1 853.0 L1065.5 855.6 L1063.9 858.2 L1062.1 860.7 L1060.2 863.2 L1058.2 865.7 L1056.1 868.2 L1053.9 870.6 L1051.5 873.0 L1049.0 875.3 L1046.4 877.6 L1043.7 879.9 L1040.9 882.1 L1038.0 884.2 L1035.0 886.3 L1031.8 888.4 L1028.6 890.4 L1025.2 892.3 L1021.8 894.2 L1018.3 896.0 L1014.6 897.7 L1010.9 899.4 L1007.1 901.1 L1003.2 902.6 L999.2 904.1 L995.1 905.5 L991.0 906.9 L986.8 908.1 L982.5 909.3 L978.2 910.5 L973.8 911.5 L969.3 912.5 L964.8 913.4 L960.2 914.2 L955.6 914.9 L950.9 915.6 L946.2 916.1 L941.4 916.6 L936.7 917.0 L931.9 917.4 L927.0 917.6 L922.2 917.7 L917.3 917.8 L912.4 917.8 L907.5 917.7 L902.7 917.5 L897.8 917.3 L892.9 916.9 L888.0 916.5 L883.1 916.0 L878.3 915.4 L873.5 914.7 L868.7 913.9 L863.9 913.1 L859.2 912.2 L854.5 911.2 L849.8 910.1 L845.2 909.0 L840.7 907.8 L836.2 906.5 L831.7 905.1 L827.3 903.7 L823.0 902.1 L818.7 900.6 L814.5 898.9 L810.4 897.2 L806.4 895.4 L802.4 893.6 L798.5 891.7 L794.7 889.8 L791.0 887.7 L787.4 885.7 L783.9 883.6 L780.4 881.4 L777.1 879.2 L773.9 876.9 L770.8 874.6 L767.7 872.3 L764.8 869.9 L762.0 867.4 L759.3 865.0 L756.7 862.5 L754.2 859.9 L751.9 857.4 L749.6 854.8 L747.5 852.2 L745.5 849.5 L743.6 846.8 L741.8 844.2 L740.1 841.5 L738.6 838.7 L737.2 836.0 L735.9 833.3 L734.7 830.5 L733.7 827.8 L732.7 825.0 L731.9 822.2 L731.2 819.5 L730.6 816.7 L730.2 813.9 L729.8 811.2 L729.6 808.4 L729.5 805.7 L729.6 803.0 L729.7 800.2 L729.9 797.5 L730.3 794.8 L730.8 792.2 L731.4 789.5 L732.1 786.9 L732.9 784.3 L733.9 781.7 L734.9 779.1 L736.1 776.6 L737.3 774.1 L738.7 771.6 L740.2 769.1 L741.7 766.7 L743.4 764.3 L745.2 762.0 L747.1 759.7 L749.0 757.4 L751.1 755.2 L753.2 753.0 L755.5 750.8 L757.8 748.7 L760.2 746.7 L762.7 744.6 L765.3 742.7 L768.0 740.7 L770.7 738.9 L773.5 737.0 L776.4 735.2 L779.4 733.5 L782.5 731.8 L785.6 730.2 L788.8 728.6 L792.0 727.1 L795.3 725.6 L798.7 724.2 L802.1 722.8 L805.6 721.5 L809.1 720.3 L812.7 719.1 L816.4 717.9 L820.1 716.9 L823.8 715.8 L827.6 714.9 L831.4 714.0 L835.3 713.1 L839.2 712.3 L843.1 711.6 L847.1 710.9 L851.1 710.3 L855.1 709.8 L859.2 709.3 L863.3 708.9 L867.4 708.5 L871.5 708.2 L875.7 708.0 L879.8 707.8 L884.0 707.7 L888.2 707.6 L892.4 707.6 L896.5 707.7 L900.7 707.9 L904.9 708.0 L909.1 708.3 L913.3 708.6 L917.5 709.0 L921.7 709.4 L925.9 709.9 L930.1 710.5 L934.2 711.1 L938.3 711.8 L942.4 712.6 L946.5 713.4 L950.6 714.2 L954.6 715.1 L958.7 716.1 L962.6 717.2 L966.6 718.3 L970.5 719.4 L974.4 720.6 L978.2 721.9 L982.0 723.2 L985.8 724.6 L989.5 726.0 L993.2 727.5 L996.8 729.1 L1000.3 730.7 L1003.8 732.3 L1007.3 734.0 L1010.7 735.8 L1014.0 737.6 L1017.2 739.4 L1020.4 741.3 L1023.5 743.3 L1026.6 745.2 L1029.6 747.3 L1032.5 749.4 L1035.3 751.5 L1038.1 753.6 L1040.7 755.8 L1043.3 758.1ZM1051.9 758.5 L1054.4 760.9 L1056.9 763.4 L1059.2 765.9 L1061.4 768.4 L1063.6 770.9 L1065.6 773.5 L1067.6 776.2 L1069.4 778.8 L1071.1 781.5 L1072.8 784.2 L1074.3 786.9 L1075.7 789.7 L1077.0 792.5 L1078.2 795.3 L1079.2 798.1 L1080.2 800.9 L1081.0 803.7 L1081.7 806.6 L1082.3 809.5 L1082.8 812.3 L1083.1 815.2 L1083.3 818.1 L1083.4 821.0 L1083.4 823.9 L1083.2 826.8 L1082.9 829.7 L1082.5 832.6 L1082.0 835.4 L1081.3 838.3 L1080.5 841.1 L1079.6 844.0 L1078.5 846.8 L1077.3 849.6 L1076.0 852.4 L1074.5 855.1 L1073.0 857.9 L1071.3 860.6 L1069.4 863.3 L1067.5 865.9 L1065.4 868.5 L1063.2 871.1 L1060.8 873.6 L1058.4 876.1 L1055.8 878.6 L1053.1 881.0 L1050.3 883.3 L1047.3 885.6 L1044.3 887.9 L1041.1 890.1 L1037.9 892.2 L1034.5 894.3 L1031.0 896.4 L1027.4 898.3 L1023.7 900.2 L1019.9 902.1 L1016.0 903.9 L1012.0 905.6 L1007.9 907.2 L1003.8 908.8 L999.5 910.3 L995.2 911.7 L990.8 913.0 L986.3 914.3 L981.8 915.4 L977.2 916.5 L972.5 917.6 L967.7 918.5 L963.0 919.4 L958.1 920.1 L953.2 920.8 L948.3 921.4 L943.3 921.9 L938.3 922.4 L933.3 922.7 L928.2 922.9 L923.2 923.1 L918.1 923.2 L912.9 923.2 L907.8 923.1 L902.7 922.9 L897.6 922.6 L892.5 922.2 L887.4 921.8 L882.3 921.2 L877.2 920.6 L872.2 919.9 L867.1 919.1 L862.1 918.2 L857.2 917.3 L852.3 916.2 L847.4 915.1 L842.6 913.9 L837.8 912.6 L833.1 911.2 L828.4 909.8 L823.8 908.3 L819.3 906.7 L814.8 905.0 L810.5 903.3 L806.1 901.5 L801.9 899.7 L797.8 897.7 L793.7 895.8 L789.8 893.7 L785.9 891.6 L782.1 889.4 L778.4 887.2 L774.9 884.9 L771.4 882.6 L768.0 880.2 L764.7 877.8 L761.6 875.4 L758.6 872.8 L755.6 870.3 L752.8 867.7 L750.1 865.1 L747.5 862.4 L745.1 859.8 L742.7 857.0 L740.5 854.3 L738.4 851.5 L736.5 848.7 L734.6 845.9 L732.9 843.1 L731.3 840.3 L729.8 837.4 L728.5 834.5 L727.3 831.7 L726.2 828.8 L725.2 825.9 L724.4 823.0 L723.7 820.1 L723.1 817.2 L722.6 814.3 L722.3 811.5 L722.1 808.6 L722.0 805.7 L722.1 802.9 L722.2 800.0 L722.5 797.2 L722.9 794.4 L723.4 791.6 L724.1 788.8 L724.8 786.1 L725.7 783.4 L726.7 780.7 L727.8 778.0 L729.0 775.4 L730.3 772.8 L731.8 770.2 L733.3 767.6 L735.0 765.1 L736.7 762.6 L738.6 760.2 L740.5 757.8 L742.6 755.4 L744.8 753.1 L747.0 750.8 L749.4 748.6 L751.8 746.4 L754.3 744.2 L756.9 742.1 L759.6 740.1 L762.4 738.1 L765.3 736.1 L768.2 734.2 L771.3 732.4 L774.4 730.6 L777.6 728.8 L780.8 727.1 L784.1 725.5 L787.5 723.9 L791.0 722.4 L794.5 720.9 L798.0 719.5 L801.7 718.1 L805.4 716.8 L809.1 715.6 L812.9 714.4 L816.8 713.3 L820.7 712.2 L824.6 711.2 L828.6 710.3 L832.6 709.4 L836.7 708.6 L840.8 707.8 L844.9 707.1 L849.1 706.5 L853.3 705.9 L857.5 705.4 L861.7 705.0 L866.0 704.6 L870.3 704.3 L874.6 704.1 L878.9 703.9 L883.3 703.8 L887.6 703.7 L892.0 703.7 L896.3 703.8 L900.7 703.9 L905.1 704.1 L909.4 704.4 L913.8 704.7 L918.2 705.1 L922.5 705.6 L926.9 706.1 L931.2 706.7 L935.5 707.3 L939.8 708.0 L944.1 708.8 L948.4 709.7 L952.6 710.5 L956.8 711.5 L961.0 712.5 L965.1 713.6 L969.2 714.7 L973.3 715.9 L977.4 717.2 L981.4 718.5 L985.3 719.9 L989.2 721.3 L993.1 722.8 L996.9 724.4 L1000.7 726.0 L1004.4 727.6 L1008.0 729.3 L1011.6 731.1 L1015.2 732.9 L1018.6 734.8 L1022.0 736.7 L1025.4 738.7 L1028.6 740.7 L1031.8 742.8 L1034.9 744.9 L1038.0 747.0 L1040.9 749.2 L1043.8 751.5 L1046.6 753.8 L1049.3 756.1ZM1058.0 756.6 L1060.6 759.1 L1063.1 761.7 L1065.6 764.3 L1067.9 766.9 L1070.2 769.6 L1072.3 772.3 L1074.4 775.0 L1076.3 777.8 L1078.1 780.5 L1079.8 783.4 L1081.4 786.2 L1082.9 789.1 L1084.2 792.0 L1085.5 794.9 L1086.6 797.8 L1087.6 800.7 L1088.5 803.7 L1089.2 806.7 L1089.9 809.7 L1090.4 812.7 L1090.7 815.7 L1091.0 818.7 L1091.1 821.7 L1091.1 824.7 L1090.9 827.7 L1090.7 830.7 L1090.2 833.7 L1089.7 836.7 L1089.0 839.7 L1088.2 842.7 L1087.2 845.7 L1086.1 848.6 L1084.9 851.5 L1083.5 854.4 L1082.1 857.3 L1080.4 860.2 L1078.7 863.0 L1076.8 865.8 L1074.7 868.6 L1072.6 871.3 L1070.3 874.0 L1067.8 876.6 L1065.3 879.3 L1062.6 881.8 L1059.8 884.3 L1056.9 886.8 L1053.8 889.2 L1050.6 891.6 L1047.3 893.9 L1043.9 896.2 L1040.4 898.3 L1036.8 900.5 L1033.0 902.5 L1029.2 904.5 L1025.2 906.5 L1021.1 908.3 L1017.0 910.1 L1012.7 911.8 L1008.4 913.5 L1004.0 915.0 L999.4 916.5 L994.8 917.9 L990.2 919.2 L985.4 920.5 L980.6 921.6 L975.7 922.7 L970.8 923.7 L965.7 924.6 L960.7 925.4 L955.6 926.1 L950.4 926.7 L945.2 927.3 L940.0 927.7 L934.7 928.1 L929.4 928.3 L924.1 928.5 L918.8 928.6 L913.5 928.6 L908.1 928.5 L902.8 928.3 L897.4 928.0 L892.1 927.6 L886.7 927.1 L881.4 926.5 L876.1 925.9 L870.8 925.1 L865.6 924.3 L860.3 923.4 L855.2 922.4 L850.0 921.3 L844.9 920.1 L839.9 918.8 L834.9 917.5 L830.0 916.1 L825.1 914.5 L820.3 913.0 L815.6 911.3 L810.9 909.6 L806.4 907.8 L801.9 905.9 L797.5 903.9 L793.1 901.9 L788.9 899.8 L784.8 897.7 L780.7 895.5 L776.8 893.2 L773.0 890.9 L769.2 888.5 L765.6 886.1 L762.1 883.6 L758.7 881.0 L755.4 878.5 L752.3 875.8 L749.2 873.2 L746.3 870.5 L743.5 867.7 L740.8 865.0 L738.3 862.1 L735.8 859.3 L733.5 856.4 L731.4 853.6 L729.3 850.6 L727.4 847.7 L725.7 844.8 L724.0 841.8 L722.5 838.8 L721.1 835.8 L719.9 832.8 L718.7 829.8 L717.7 826.8 L716.9 823.8 L716.2 820.8 L715.6 817.8 L715.1 814.8 L714.8 811.7 L714.6 808.8 L714.5 805.8 L714.6 802.8 L714.8 799.8 L715.1 796.9 L715.5 794.0 L716.1 791.1 L716.7 788.2 L717.5 785.3 L718.5 782.5 L719.5 779.7 L720.7 776.9 L722.0 774.2 L723.4 771.4 L724.9 768.8 L726.5 766.1 L728.2 763.5 L730.1 760.9 L732.0 758.4 L734.1 755.9 L736.2 753.4 L738.5 751.0 L740.8 748.7 L743.3 746.3 L745.8 744.1 L748.4 741.8 L751.2 739.6 L754.0 737.5 L756.9 735.4 L759.9 733.4 L763.0 731.4 L766.1 729.5 L769.4 727.6 L772.7 725.8 L776.0 724.1 L779.5 722.4 L783.0 720.7 L786.6 719.1 L790.3 717.6 L794.0 716.1 L797.8 714.7 L801.6 713.4 L805.5 712.1 L809.5 710.9 L813.5 709.7 L817.5 708.6 L821.6 707.6 L825.7 706.6 L829.9 705.7 L834.2 704.9 L838.4 704.1 L842.7 703.4 L847.0 702.7 L851.4 702.1 L855.8 701.6 L860.2 701.1 L864.6 700.8 L869.1 700.4 L873.6 700.2 L878.1 700.0 L882.6 699.9 L887.1 699.8 L891.6 699.8 L896.1 699.9 L900.7 700.0 L905.2 700.3 L909.8 700.5 L914.3 700.9 L918.8 701.3 L923.3 701.8 L927.8 702.3 L932.3 702.9 L936.8 703.6 L941.3 704.3 L945.7 705.1 L950.2 706.0 L954.6 706.9 L958.9 707.9 L963.3 708.9 L967.6 710.1 L971.9 711.2 L976.1 712.5 L980.3 713.8 L984.5 715.1 L988.6 716.6 L992.7 718.1 L996.7 719.6 L1000.7 721.2 L1004.6 722.9 L1008.4 724.6 L1012.2 726.4 L1016.0 728.2 L1019.6 730.1 L1023.3 732.0 L1026.8 734.0 L1030.3 736.1 L1033.7 738.2 L1037.0 740.3 L1040.2 742.5 L1043.4 744.7 L1046.5 747.0 L1049.5 749.4 L1052.4 751.7 L1055.2 754.2Z" fill="none" stroke="#2a3214" stroke-width="1.8"/>
<path d="M1064.0 754.8 L1066.8 757.4 L1069.4 760.0 L1072.0 762.7 L1074.4 765.4 L1076.8 768.2 L1079.0 771.0 L1081.1 773.8 L1083.2 776.7 L1085.1 779.6 L1086.8 782.5 L1088.5 785.5 L1090.1 788.4 L1091.5 791.4 L1092.8 794.5 L1094.0 797.5 L1095.1 800.6 L1096.0 803.7 L1096.8 806.8 L1097.5 809.9 L1098.0 813.0 L1098.4 816.1 L1098.7 819.2 L1098.8 822.4 L1098.8 825.5 L1098.7 828.7 L1098.4 831.8 L1098.0 834.9 L1097.4 838.1 L1096.7 841.2 L1095.9 844.3 L1094.9 847.4 L1093.8 850.4 L1092.5 853.5 L1091.1 856.5 L1089.6 859.5 L1087.9 862.5 L1086.1 865.5 L1084.1 868.4 L1082.0 871.3 L1079.8 874.1 L1077.4 876.9 L1074.9 879.7 L1072.2 882.4 L1069.4 885.1 L1066.5 887.7 L1063.5 890.3 L1060.3 892.8 L1057.0 895.3 L1053.6 897.7 L1050.0 900.1 L1046.4 902.4 L1042.6 904.6 L1038.7 906.7 L1034.7 908.8 L1030.5 910.9 L1026.3 912.8 L1022.0 914.7 L1017.6 916.5 L1013.0 918.2 L1008.4 919.8 L1003.7 921.4 L998.9 922.8 L994.0 924.2 L989.1 925.5 L984.0 926.7 L978.9 927.8 L973.8 928.9 L968.5 929.8 L963.3 930.7 L957.9 931.4 L952.6 932.1 L947.1 932.6 L941.7 933.1 L936.2 933.5 L930.7 933.7 L925.1 933.9 L919.6 934.0 L914.0 934.0 L908.4 933.9 L902.8 933.7 L897.2 933.4 L891.6 933.0 L886.1 932.5 L880.5 931.9 L875.0 931.2 L869.5 930.4 L864.0 929.5 L858.5 928.6 L853.1 927.5 L847.8 926.4 L842.5 925.1 L837.2 923.8 L832.0 922.4 L826.9 920.9 L821.8 919.3 L816.8 917.7 L811.9 915.9 L807.0 914.1 L802.2 912.2 L797.6 910.2 L793.0 908.2 L788.5 906.1 L784.1 903.9 L779.7 901.7 L775.5 899.4 L771.5 897.0 L767.5 894.6 L763.6 892.1 L759.8 889.5 L756.2 886.9 L752.6 884.3 L749.2 881.6 L746.0 878.8 L742.8 876.1 L739.8 873.2 L736.9 870.4 L734.1 867.5 L731.4 864.6 L728.9 861.6 L726.5 858.6 L724.3 855.6 L722.2 852.6 L720.2 849.5 L718.4 846.4 L716.7 843.3 L715.1 840.2 L713.7 837.1 L712.4 834.0 L711.3 830.8 L710.2 827.7 L709.4 824.6 L708.6 821.4 L708.0 818.3 L707.6 815.2 L707.2 812.0 L707.1 808.9 L707.0 805.8 L707.1 802.7 L707.3 799.6 L707.6 796.6 L708.1 793.5 L708.7 790.5 L709.4 787.5 L710.3 784.6 L711.3 781.6 L712.4 778.7 L713.6 775.8 L714.9 773.0 L716.4 770.1 L718.0 767.4 L719.7 764.6 L721.5 761.9 L723.4 759.2 L725.4 756.6 L727.6 754.0 L729.8 751.5 L732.2 749.0 L734.6 746.5 L737.2 744.1 L739.8 741.7 L742.6 739.4 L745.4 737.2 L748.4 735.0 L751.4 732.8 L754.5 730.7 L757.7 728.7 L761.0 726.7 L764.4 724.7 L767.8 722.8 L771.3 721.0 L774.9 719.3 L778.6 717.6 L782.3 715.9 L786.1 714.3 L790.0 712.8 L793.9 711.4 L797.9 710.0 L801.9 708.6 L806.0 707.4 L810.2 706.2 L814.4 705.0 L818.6 704.0 L822.9 703.0 L827.3 702.0 L831.7 701.1 L836.1 700.3 L840.5 699.6 L845.0 698.9 L849.5 698.3 L854.1 697.8 L858.7 697.3 L863.3 696.9 L867.9 696.6 L872.5 696.3 L877.2 696.1 L881.9 696.0 L886.5 695.9 L891.2 695.9 L895.9 696.0 L900.6 696.2 L905.3 696.4 L910.1 696.7 L914.8 697.0 L919.5 697.5 L924.1 697.9 L928.8 698.5 L933.5 699.1 L938.1 699.8 L942.8 700.6 L947.4 701.4 L952.0 702.3 L956.5 703.3 L961.1 704.3 L965.6 705.4 L970.1 706.5 L974.5 707.8 L978.9 709.0 L983.3 710.4 L987.6 711.8 L991.9 713.3 L996.1 714.8 L1000.3 716.4 L1004.4 718.1 L1008.4 719.8 L1012.5 721.6 L1016.4 723.4 L1020.3 725.3 L1024.1 727.3 L1027.9 729.3 L1031.6 731.3 L1035.2 733.4 L1038.7 735.6 L1042.2 737.8 L1045.5 740.1 L1048.8 742.4 L1052.0 744.8 L1055.2 747.2 L1058.2 749.7 L1061.2 752.2Z" fill="none" stroke="#5c7a1c" stroke-width="0.8"/>
<clipPath id="bodyclip"><path d="M551.7 304.2 L551.8 303.9 L551.4 303.1 L551.2 302.4 L551.8 302.2 L554.0 302.9 L558.3 305.0 L565.2 308.8 L574.2 313.9 L584.7 320.1 L596.1 326.7 L607.9 333.5 L619.4 340.0 L630.7 346.4 L642.4 353.0 L654.4 359.7 L666.8 366.5 L679.5 373.3 L692.5 380.0 L706.4 386.9 L721.4 394.0 L736.7 401.1 L751.6 408.0 L765.5 414.4 L777.8 420.0 L788.1 424.8 L797.0 428.8 L804.8 432.4 L812.1 435.6 L819.2 438.8 L826.7 442.2 L834.5 445.7 L842.2 449.0 L849.8 452.3 L857.2 455.6 L864.3 458.9 L871.0 462.2 L877.2 465.5 L882.9 468.8 L888.4 472.1 L893.7 475.4 L899.0 478.7 L904.4 482.2 L910.0 485.7 L915.5 489.1 L921.1 492.6 L926.7 496.3 L932.2 500.2 L937.8 504.4 L943.5 509.0 L949.3 514.0 L955.1 519.2 L960.7 524.6 L966.1 530.1 L971.0 535.6 L975.4 541.3 L979.4 547.2 L983.1 553.2 L986.6 559.2 L990.0 565.2 L993.3 571.0 L996.6 576.6 L999.8 582.1 L1002.8 587.6 L1005.8 593.0 L1008.5 598.6 L1011.0 604.4 L1013.3 610.6 L1015.5 617.3 L1017.6 624.1 L1019.4 630.7 L1020.9 636.8 L1022.2 642.2 L1023.1 646.2 L1023.7 648.8 L1024.0 651.0 L1024.2 653.6 L1024.3 657.3 L1024.4 663.0 L1024.6 671.4 L1024.7 681.9 L1024.8 693.7 L1024.7 705.6 L1024.6 716.7 L1024.4 726.0 L1024.0 733.7 L1023.4 740.7 L1022.7 746.9 L1022.0 752.3 L1021.4 756.6 L1021.0 760.0 L1014.6 813.1 L1014.5 814.8 L1014.4 816.6 L1014.2 818.4 L1014.0 820.2 L1013.6 822.0 L1013.2 823.7 L1012.7 825.5 L1012.1 827.2 L1011.5 829.0 L1010.7 830.7 L1009.9 832.4 L1009.0 834.1 L1008.0 835.8 L1007.0 837.4 L1005.9 839.1 L1004.7 840.7 L1003.4 842.3 L1002.0 843.8 L1000.6 845.4 L999.1 846.9 L997.5 848.4 L995.9 849.9 L994.2 851.3 L992.4 852.7 L990.6 854.1 L988.7 855.5 L986.7 856.8 L984.6 858.1 L982.5 859.3 L980.4 860.5 L978.1 861.7 L975.8 862.8 L973.5 863.9 L971.1 864.9 L968.6 866.0 L966.1 866.9 L963.6 867.8 L961.0 868.7 L958.3 869.6 L955.7 870.3 L952.9 871.1 L950.2 871.8 L947.4 872.4 L944.5 873.0 L941.6 873.6 L938.7 874.1 L935.8 874.5 L932.8 874.9 L929.8 875.3 L926.8 875.6 L923.8 875.8 L920.8 876.0 L917.7 876.2 L914.6 876.3 L911.6 876.3 L908.5 876.3 L905.4 876.2 L902.3 876.1 L899.2 876.0 L896.1 875.8 L893.0 875.5 L889.9 875.2 L886.9 874.8 L883.8 874.4 L880.8 873.9 L877.7 873.4 L874.7 872.8 L871.7 872.2 L868.8 871.6 L865.8 870.9 L862.9 870.1 L860.1 869.3 L857.2 868.5 L854.4 867.6 L851.7 866.6 L848.9 865.6 L846.2 864.6 L843.6 863.6 L841.0 862.5 L838.4 861.3 L835.9 860.1 L833.5 858.9 L831.1 857.7 L828.8 856.4 L826.5 855.1 L824.2 853.7 L822.1 852.3 L820.0 850.9 L817.9 849.4 L815.9 848.0 L814.0 846.5 L812.1 844.9 L810.4 843.4 L808.6 841.8 L807.0 840.2 L805.4 838.6 L803.9 836.9 L802.5 835.2 L801.1 833.6 L799.8 831.9 L798.6 830.2 L797.5 828.4 L796.4 826.7 L795.4 824.9 L794.5 823.2 L793.7 821.4 L792.9 819.6 L792.2 817.9 L791.6 816.1 L791.1 814.3 L790.6 812.5 L790.3 810.7 L790.0 808.9 L789.7 807.1 L789.6 805.4 L789.5 803.6 L792.2 634.6 L760.0 620.0 L757.2 619.1 L753.1 617.7 L748.4 616.1 L743.5 614.5 L738.8 613.1 L735.0 612.0 L731.8 611.2 L728.9 610.7 L726.2 610.3 L723.9 610.0 L722.0 609.8 L720.6 609.6 L707.6 596.7 L650.6 537.0 L598.7 485.2 L546.9 430.7 L501.5 378.9 L500.2 365.0 L500.2 364.0 L500.2 362.7 L500.2 361.2 L500.3 359.5 L500.5 357.7 L500.8 356.0 L501.3 354.3 L501.9 352.6 L502.6 350.8 L503.4 348.9 L504.2 347.0 L505.0 345.0 L505.7 342.9 L506.4 340.8 L507.0 338.6 L507.8 336.3 L508.8 334.0 L510.0 331.7 L511.5 329.2 L513.3 326.6 L515.3 324.0 L517.4 321.4 L519.6 318.9 L521.7 316.7 L524.0 314.6 L526.5 312.6 L529.1 310.8 L531.5 309.1 L533.5 307.7 L535.0 306.7Z"/></clipPath>
<path d="M551.7 304.2 L551.8 303.9 L551.4 303.1 L551.2 302.4 L551.8 302.2 L554.0 302.9 L558.3 305.0 L565.2 308.8 L574.2 313.9 L584.7 320.1 L596.1 326.7 L607.9 333.5 L619.4 340.0 L630.7 346.4 L642.4 353.0 L654.4 359.7 L666.8 366.5 L679.5 373.3 L692.5 380.0 L706.4 386.9 L721.4 394.0 L736.7 401.1 L751.6 408.0 L765.5 414.4 L777.8 420.0 L788.1 424.8 L797.0 428.8 L804.8 432.4 L812.1 435.6 L819.2 438.8 L826.7 442.2 L834.5 445.7 L842.2 449.0 L849.8 452.3 L857.2 455.6 L864.3 458.9 L871.0 462.2 L877.2 465.5 L882.9 468.8 L888.4 472.1 L893.7 475.4 L899.0 478.7 L904.4 482.2 L910.0 485.7 L915.5 489.1 L921.1 492.6 L926.7 496.3 L932.2 500.2 L937.8 504.4 L943.5 509.0 L949.3 514.0 L955.1 519.2 L960.7 524.6 L966.1 530.1 L971.0 535.6 L975.4 541.3 L979.4 547.2 L983.1 553.2 L986.6 559.2 L990.0 565.2 L993.3 571.0 L996.6 576.6 L999.8 582.1 L1002.8 587.6 L1005.8 593.0 L1008.5 598.6 L1011.0 604.4 L1013.3 610.6 L1015.5 617.3 L1017.6 624.1 L1019.4 630.7 L1020.9 636.8 L1022.2 642.2 L1023.1 646.2 L1023.7 648.8 L1024.0 651.0 L1024.2 653.6 L1024.3 657.3 L1024.4 663.0 L1024.6 671.4 L1024.7 681.9 L1024.8 693.7 L1024.7 705.6 L1024.6 716.7 L1024.4 726.0 L1024.0 733.7 L1023.4 740.7 L1022.7 746.9 L1022.0 752.3 L1021.4 756.6 L1021.0 760.0 L1014.6 813.1 L1014.5 814.8 L1014.4 816.6 L1014.2 818.4 L1014.0 820.2 L1013.6 822.0 L1013.2 823.7 L1012.7 825.5 L1012.1 827.2 L1011.5 829.0 L1010.7 830.7 L1009.9 832.4 L1009.0 834.1 L1008.0 835.8 L1007.0 837.4 L1005.9 839.1 L1004.7 840.7 L1003.4 842.3 L1002.0 843.8 L1000.6 845.4 L999.1 846.9 L997.5 848.4 L995.9 849.9 L994.2 851.3 L992.4 852.7 L990.6 854.1 L988.7 855.5 L986.7 856.8 L984.6 858.1 L982.5 859.3 L980.4 860.5 L978.1 861.7 L975.8 862.8 L973.5 863.9 L971.1 864.9 L968.6 866.0 L966.1 866.9 L963.6 867.8 L961.0 868.7 L958.3 869.6 L955.7 870.3 L952.9 871.1 L950.2 871.8 L947.4 872.4 L944.5 873.0 L941.6 873.6 L938.7 874.1 L935.8 874.5 L932.8 874.9 L929.8 875.3 L926.8 875.6 L923.8 875.8 L920.8 876.0 L917.7 876.2 L914.6 876.3 L911.6 876.3 L908.5 876.3 L905.4 876.2 L902.3 876.1 L899.2 876.0 L896.1 875.8 L893.0 875.5 L889.9 875.2 L886.9 874.8 L883.8 874.4 L880.8 873.9 L877.7 873.4 L874.7 872.8 L871.7 872.2 L868.8 871.6 L865.8 870.9 L862.9 870.1 L860.1 869.3 L857.2 868.5 L854.4 867.6 L851.7 866.6 L848.9 865.6 L846.2 864.6 L843.6 863.6 L841.0 862.5 L838.4 861.3 L835.9 860.1 L833.5 858.9 L831.1 857.7 L828.8 856.4 L826.5 855.1 L824.2 853.7 L822.1 852.3 L820.0 850.9 L817.9 849.4 L815.9 848.0 L814.0 846.5 L812.1 844.9 L810.4 843.4 L808.6 841.8 L807.0 840.2 L805.4 838.6 L803.9 836.9 L802.5 835.2 L801.1 833.6 L799.8 831.9 L798.6 830.2 L797.5 828.4 L796.4 826.7 L795.4 824.9 L794.5 823.2 L793.7 821.4 L792.9 819.6 L792.2 817.9 L791.6 816.1 L791.1 814.3 L790.6 812.5 L790.3 810.7 L790.0 808.9 L789.7 807.1 L789.6 805.4 L789.5 803.6 L792.2 634.6 L760.0 620.0 L757.2 619.1 L753.1 617.7 L748.4 616.1 L743.5 614.5 L738.8 613.1 L735.0 612.0 L731.8 611.2 L728.9 610.7 L726.2 610.3 L723.9 610.0 L722.0 609.8 L720.6 609.6 L707.6 596.7 L650.6 537.0 L598.7 485.2 L546.9 430.7 L501.5 378.9 L500.2 365.0 L500.2 364.0 L500.2 362.7 L500.2 361.2 L500.3 359.5 L500.5 357.7 L500.8 356.0 L501.3 354.3 L501.9 352.6 L502.6 350.8 L503.4 348.9 L504.2 347.0 L505.0 345.0 L505.7 342.9 L506.4 340.8 L507.0 338.6 L507.8 336.3 L508.8 334.0 L510.0 331.7 L511.5 329.2 L513.3 326.6 L515.3 324.0 L517.4 321.4 L519.6 318.9 L521.7 316.7 L524.0 314.6 L526.5 312.6 L529.1 310.8 L531.5 309.1 L533.5 307.7 L535.0 306.7Z" fill="url(#tex)"/>
<g clip-path="url(#bodyclip)">
<path d="M551.7 304.2 L551.8 303.9 L551.4 303.1 L551.2 302.4 L551.8 302.2 L554.0 302.9 L558.3 305.0 L565.2 308.8 L574.2 313.9 L584.7 320.1 L596.1 326.7 L607.9 333.5 L619.4 340.0 L630.7 346.4 L642.4 353.0 L654.4 359.7 L666.8 366.5 L679.5 373.3 L692.5 380.0 L706.4 386.9 L721.4 394.0 L736.7 401.1 L751.6 408.0 L765.5 414.4 L777.8 420.0 L788.1 424.8 L797.0 428.8 L804.8 432.4 L812.1 435.6 L819.2 438.8 L826.7 442.2 L834.5 445.7 L842.2 449.0 L849.8 452.3 L857.2 455.6 L864.3 458.9 L871.0 462.2 L877.2 465.5 L882.9 468.8 L888.4 472.1 L893.7 475.4 L899.0 478.7 L904.4 482.2 L910.0 485.7 L915.5 489.1 L921.1 492.6 L926.7 496.3 L932.2 500.2 L937.8 504.4 L943.5 509.0 L949.3 514.0 L955.1 519.2 L960.7 524.6 L966.1 530.1 L971.0 535.6 L975.4 541.3 L979.4 547.2 L983.1 553.2 L986.6 559.2 L990.0 565.2 L993.3 571.0 L996.6 576.6 L999.8 582.1 L1002.8 587.6 L1005.8 593.0 L1008.5 598.6 L1011.0 604.4 L1013.3 610.6 L1015.5 617.3 L1017.6 624.1 L1019.4 630.7 L1020.9 636.8 L1022.2 642.2 L1023.1 646.2 L1023.7 648.8 L1024.0 651.0 L1024.2 653.6 L1024.3 657.3 L1024.4 663.0 L1024.6 671.4 L1024.7 681.9 L1024.8 693.7 L1024.7 705.6 L1024.6 716.7 L1024.4 726.0 L1024.0 733.7 L1023.4 740.7 L1022.7 746.9 L1022.0 752.3 L1021.4 756.6 L1021.0 760.0 L1040.0 700.0 L1040.0 1000.0 L1030.0 1000.0 L1030.0 700.0 L1028.1 695.0 L1025.7 687.9 L1022.7 679.6 L1019.3 670.8 L1015.7 662.3 L1012.0 655.0 L1008.2 648.7 L1004.3 642.8 L1000.2 637.2 L995.7 631.9 L990.6 626.8 L985.0 622.0 L978.7 617.4 L971.9 613.1 L964.6 609.1 L956.8 605.2 L948.6 601.5 L940.0 598.0 L930.9 594.6 L921.1 591.3 L910.9 588.1 L900.6 585.2 L890.2 582.5 L880.0 580.0 L869.7 577.9 L859.2 576.1 L848.6 574.5 L838.4 573.0 L828.7 571.6 L820.0 570.0 L812.0 568.2 L804.3 566.3 L797.2 564.4 L791.0 562.6 L785.9 561.1 L782.0 560.0 L600.0 360.0 L556.0 300.0Z" fill="#62792a" filter="url(#blur8)"/>
<path d="M551.7 304.2 L551.8 303.9 L551.4 303.1 L551.2 302.4 L551.8 302.2 L554.0 302.9 L558.3 305.0 L565.2 308.8 L574.2 313.9 L584.7 320.1 L596.1 326.7 L607.9 333.5 L619.4 340.0 L630.7 346.4 L642.4 353.0 L654.4 359.7 L666.8 366.5 L679.5 373.3 L692.5 380.0 L706.4 386.9 L721.4 394.0 L736.7 401.1 L751.6 408.0 L765.5 414.4 L777.8 420.0 L788.1 424.8 L797.0 428.8 L804.8 432.4 L812.1 435.6 L819.2 438.8 L826.7 442.2 L834.5 445.7 L842.2 449.0 L849.8 452.3 L857.2 455.6 L864.3 458.9 L871.0 462.2 L877.2 465.5 L882.9 468.8 L888.4 472.1 L893.7 475.4 L899.0 478.7 L904.4 482.2 L910.0 485.7 L915.5 489.1 L921.1 492.6 L926.7 496.3 L932.2 500.2 L937.8 504.4 L943.5 509.0 L949.3 514.0 L955.1 519.2 L960.7 524.6 L966.1 530.1 L971.0 535.6 L975.4 541.3 L979.4 547.2 L983.1 553.2 L986.6 559.2 L990.0 565.2 L993.3 571.0 L996.6 576.6 L999.8 582.1 L1002.8 587.6 L1005.8 593.0 L1008.5 598.6 L1011.0 604.4 L1013.3 610.6 L1015.5 617.3 L1017.6 624.1 L1019.4 630.7 L1020.9 636.8 L1022.2 642.2 L1023.1 646.2 L1023.7 648.8 L1024.0 651.0 L1024.2 653.6 L1024.3 657.3 L1024.4 663.0 L1024.6 671.4 L1024.7 681.9 L1024.8 693.7 L1024.7 705.6 L1024.6 716.7 L1024.4 726.0 L1024.0 733.7 L1023.4 740.7 L1022.7 746.9 L1022.0 752.3 L1021.4 756.6 L1021.0 760.0 L1040.0 700.0 L1040.0 1000.0 L1030.0 1000.0 L1030.0 700.0 L1028.1 695.0 L1025.7 687.9 L1022.7 679.6 L1019.3 670.8 L1015.7 662.3 L1012.0 655.0 L1008.2 648.7 L1004.3 642.8 L1000.2 637.2 L995.7 631.9 L990.6 626.8 L985.0 622.0 L978.7 617.4 L971.9 613.1 L964.6 609.1 L956.8 605.2 L948.6 601.5 L940.0 598.0 L930.9 594.6 L921.1 591.3 L910.9 588.1 L900.6 585.2 L890.2 582.5 L880.0 580.0 L869.7 577.9 L859.2 576.1 L848.6 574.5 L838.4 573.0 L828.7 571.6 L820.0 570.0 L812.0 568.2 L804.3 566.3 L797.2 564.4 L791.0 562.6 L785.9 561.1 L782.0 560.0 L600.0 360.0 L556.0 300.0Z" fill="url(#texd)" opacity="0.35"/>
<path d="M551.7 304.2 L551.8 303.9 L551.4 303.1 L551.2 302.4 L551.8 302.2 L554.0 302.9 L558.3 305.0 L565.2 308.8 L574.2 313.9 L584.7 320.1 L596.1 326.7 L607.9 333.5 L619.4 340.0 L630.7 346.4 L642.4 353.0 L654.4 359.7 L666.8 366.5 L679.5 373.3 L692.5 380.0 L706.4 386.9 L721.4 394.0 L736.7 401.1 L751.6 408.0 L765.5 414.4 L777.8 420.0 L788.1 424.8 L797.0 428.8 L804.8 432.4 L812.1 435.6 L819.2 438.8 L826.7 442.2 L834.5 445.7 L842.2 449.0 L849.8 452.3 L857.2 455.6 L864.3 458.9 L871.0 462.2 L877.2 465.5 L882.9 468.8 L888.4 472.1 L893.7 475.4 L899.0 478.7 L904.4 482.2 L910.0 485.7 L915.5 489.1 L921.1 492.6 L926.7 496.3 L932.2 500.2 L937.8 504.4 L943.5 509.0 L949.3 514.0 L955.1 519.2 L960.7 524.6 L966.1 530.1 L971.0 535.6 L975.4 541.3 L979.4 547.2 L983.1 553.2 L986.6 559.2 L990.0 565.2 L993.3 571.0 L996.6 576.6 L999.8 582.1 L1002.8 587.6 L1005.8 593.0 L1008.5 598.6 L1011.0 604.4 L1013.3 610.6 L1015.5 617.3 L1017.6 624.1 L1019.4 630.7 L1020.9 636.8 L1022.2 642.2 L1023.1 646.2 L1023.7 648.8 L1024.0 651.0 L1024.2 653.6 L1024.3 657.3 L1024.4 663.0 L1024.6 671.4 L1024.7 681.9 L1024.8 693.7 L1024.7 705.6 L1024.6 716.7 L1024.4 726.0 L1024.0 733.7 L1023.4 740.7 L1022.7 746.9 L1022.0 752.3 L1021.4 756.6 L1021.0 760.0 L1045.0 662.0 L1045.0 290.0 L1026.0 650.0 L1023.8 644.4 L1020.9 636.5 L1017.4 627.2 L1013.4 617.4 L1009.3 608.0 L1005.0 600.0 L1000.7 593.2 L996.2 586.9 L991.5 581.1 L986.4 575.5 L981.0 570.2 L975.0 565.0 L968.5 559.9 L961.7 554.9 L954.4 550.1 L946.7 545.7 L938.5 541.6 L930.0 538.0 L920.8 534.9 L910.7 532.3 L900.3 530.1 L889.8 528.2 L879.6 526.5 L870.0 525.0 L860.9 523.7 L852.0 522.7 L843.4 521.9 L835.2 521.2 L827.3 520.6 L820.0 520.0 L812.9 519.3 L805.9 518.7 L799.4 518.2 L793.5 517.7 L788.6 517.3 L785.0 517.0 L760.0 530.0 L560.0 350.0 L530.0 310.0Z" fill="#37421a" filter="url(#blur3)"/>
<path d="M600.0 332.0 L610.9 337.7 L625.9 345.7 L643.8 355.1 L663.0 365.2 L682.2 375.4 L700.0 385.0 L716.9 394.2 L734.1 403.7 L751.2 413.3 L768.1 422.7 L784.5 431.7 L800.0 440.0 L814.6 447.4 L828.5 454.1 L841.9 460.3 L854.8 466.5 L867.5 472.9 L880.0 480.0 L892.6 487.8 L905.2 495.9 L917.5 504.4 L929.3 513.0 L940.2 521.6 L950.0 530.0 L958.9 538.9 L967.0 548.5 L974.4 558.1 L980.7 567.0 L986.0 574.6 L990.0 580.0 L985.0 620.0 L900.0 560.0 L800.0 510.0 L700.0 460.0 L600.0 370.0Z" fill="url(#texd)" opacity="0.45" filter="url(#blur1)"/>
<path d="M1014 650 L1030 650 L1030 790 L1012 790Z" fill="#6f8c24" filter="url(#blur3)" opacity="0.6"/>
<path d="M795 640 Q850 650 905 675 Q940 690 960 700 Q900 700 850 680 Q815 665 795 660Z" fill="#6c8a24" opacity="0.25" filter="url(#blur3)"/>
<path d="M960 762 Q950 790 938 815 Q922 848 910 874 Q906 850 918 820 Q935 785 960 762Z" fill="none" stroke="#3e5216" stroke-width="2" stroke-dasharray="2 1.5" opacity="0.7"/>
<path d="M1000 800 Q975 820 955 845 Q940 865 932 878" fill="none" stroke="#4a6018" stroke-width="1.2" stroke-dasharray="1.5 2" opacity="0.5"/>
</g>
<path d="M544.6 308.8 L780.6 521.8 L780.2 537.0 L769.8 560.4 L754.3 578.5 L733.5 591.5 L715.4 595.4 L717.4 587.4 L660.3 527.6 L608.4 475.8 L556.9 421.6 L511.7 370.0 L508.0 362.0 L513.0 338.0 L527.0 320.0Z" fill="#343f18"/>
<clipPath id="intclip"><path d="M544.6 308.8 L780.6 521.8 L780.2 537.0 L769.8 560.4 L754.3 578.5 L733.5 591.5 L715.4 595.4 L717.4 587.4 L660.3 527.6 L608.4 475.8 L556.9 421.6 L511.7 370.0 L508.0 362.0 L513.0 338.0 L527.0 320.0Z"/></clipPath>
<g clip-path="url(#intclip)">
<path d="M540.0 300.0 L600.0 320.0 L790.0 517.0 L780.2 537.0 L769.8 560.4 L728.3 529.3 L676.5 489.0 L624.6 451.0 L572.8 414.0 L521.0 383.0 L500.0 370.0Z" fill="#a2cb2f" filter="url(#blur3)"/>
<path d="M540.0 300.0 L600.0 320.0 L790.0 517.0 L780.2 537.0 L769.8 560.4 L728.3 529.3 L676.5 489.0 L624.6 451.0 L572.8 414.0 L521.0 383.0 L500.0 370.0Z" fill="url(#texl)" opacity="0.55"/>
</g>
<g clip-path="url(#bodyclip)">
<path d="M506.8 374.3 L552.1 426.0 L603.7 480.3 L655.6 532.1 L712.7 591.9" fill="none" stroke="#9cc231" stroke-width="14"/>
<path d="M506.2 374.8 L551.5 426.5 L603.1 480.9 L655.0 532.7 L712.1 592.4" fill="none" stroke="#4f6320" stroke-width="1"/>
<path d="M510.5 371.0 L555.8 422.6 L607.3 476.8 L659.2 528.6 L716.3 588.4" fill="none" stroke="#3a4718" stroke-width="1"/>
<path d="M549.0 304.0 L785.0 517.0" fill="none" stroke="#8eb02c" stroke-width="13"/>
<path d="M549.0 304.0 L785.0 517.0" fill="none" stroke="#5a7021" stroke-width="1"/>
<path d="M553.4 299.2 L789.4 512.2" fill="none" stroke="#2e3716" stroke-width="1.2"/>
<path d="M785 517 Q784 560 760 580 Q742 594 716 599" fill="none" stroke="#9cc431" stroke-width="6"/>
<path d="M780 521 Q779 558 757 576 Q740 590 716 594" fill="none" stroke="#3d4a18" stroke-width="1"/>
<path d="M502 379 Q496 342 519 318 Q534 305 552 304" fill="none" stroke="#8fb82b" stroke-width="5"/>
</g>
</g></svg>
<div id="titlebar"></div><div id="menubar"></div>
<svg class="abs" style="left:2px;top:3px" width="17" height="17" viewBox="0 0 17 17">
<path d="M4 0H16V12L12 16H1V4Z" fill="#1aa7e5" transform="translate(0,0)"/>
<path d="M12.5 5.2H7.6Q5 5.2 5 7.8V8.2Q5 10.8 7.6 10.8H12.5" stroke="#fff" stroke-width="2.3" fill="none"/>
</svg>
<div class="txt " style="left:23.50px;top:6.18px;font-size:11.6px;line-height:11.6px;color:#000">Ultimaker Cura</div>
<svg class="abs" style="left:1790px;top:0" width="130" height="21" viewBox="1790 0 130 21">
<path d="M1799 10.5H1809" stroke="#000" stroke-width="1"/>
<path d="M1844.5 7.5H1852.5V15.5H1844.5Z" stroke="#000" stroke-width="1" fill="none"/>
<path d="M1846.5 7.5V5.5H1854.5V13.5H1852.5" stroke="#000" stroke-width="1" fill="none"/>
<path d="M1890 5L1900 15M1900 5L1890 15" stroke="#000" stroke-width="1.1"/>
</svg>
<div class="txt " style="left:3.00px;top:27.10px;font-size:11.7px;line-height:11.7px;color:#000">Файл</div>
<div class="txt " style="left:40.00px;top:27.10px;font-size:11.7px;line-height:11.7px;color:#000">Правка</div>
<div class="txt " style="left:86.30px;top:27.10px;font-size:11.7px;line-height:11.7px;color:#000">Вид</div>
<div class="txt " style="left:114.30px;top:27.10px;font-size:11.7px;line-height:11.7px;color:#000">Параметры</div>
<div class="txt " style="left:184.30px;top:27.10px;font-size:11.7px;line-height:11.7px;color:#000">Расширения</div>
<div class="txt " style="left:260.00px;top:27.10px;font-size:11.7px;line-height:11.7px;color:#000">Настройки</div>
<div class="txt " style="left:327.00px;top:27.10px;font-size:11.7px;line-height:11.7px;color:#000">Справка</div>
<div class="abs" style="left:114px;top:39px;width:8px;height:1px;background:#000"></div>
<div id="header"></div>
<svg class="abs" style="left:10px;top:54px" width="102" height="24" viewBox="0 0 102 24">
<g stroke="#fff" stroke-width="5.2" fill="none">
<path d="M21.6 4.6H10A5.5 5.5 0 0 0 4.5 10.1V13.7A5.5 5.5 0 0 0 10 19.2H21.6"/>
<path d="M28.8 2V11.9A7.3 7.3 0 0 0 43.4 11.9V2"/>
<path d="M53.2 21.8V11.9A7.3 7.3 0 0 1 60.5 4.6H62.6"/>
<path d="M82.4 21.8V4.6H75A7.2 7.3 0 0 0 67.8 11.9A7.2 7.3 0 0 0 75 19.2H82.4"/>
</g>
<path d="M92.5 12.6H98.2V18.5L96.1 20.6H90.4V14.7Z" fill="#1aa7e5"/>
</svg>
<div class="txt " style="left:513.50px;top:61.14px;font-size:12px;line-height:12px;color:#fff">ПОДГОТОВКА</div>
<div class="abs" style="left:624px;top:52px;width:237px;height:28px;background:#fff;border-radius:2px"></div>
<div class="txt " style="left:648.80px;top:61.14px;font-size:12px;line-height:12px;color:#08073f;letter-spacing:-0.34px">ПРЕДВАРИТЕЛЬНЫЙ ПРОСМОТР</div>
<div class="txt " style="left:891.50px;top:61.14px;font-size:12px;line-height:12px;color:#fff;letter-spacing:-0.32px">МОНИТОР</div>
<div class="abs" style="left:1464px;top:52px;width:240px;height:28px;background:#fff;border-radius:3px"></div>
<div class="txt " style="left:1482.30px;top:60.10px;font-size:13px;line-height:13px;color:#191919">3d-sprinter</div>
<svg class="abs" style="left:1680px;top:58px" width="12" height="16"><path d="M8.5 2.5L3.5 8L8.5 13.5" stroke="#191919" stroke-width="1.6" fill="none"/></svg>
<div class="abs" style="left:1790px;top:54px;width:58px;height:24px;border:1px solid #fff;border-radius:2px"></div>
<div class="txt " style="left:1797.00px;top:61.59px;font-size:11px;line-height:11px;color:#fff">Магазин</div>
<div class="abs" style="left:1839px;top:45px;width:18px;height:18px;border-radius:9px;background:#f20d0d"></div>
<div class="txt " style="left:1844.80px;top:48.44px;font-size:12px;line-height:12px;color:#fff">1</div>
<div class="abs" style="left:1868px;top:50px;width:32px;height:32px;border-radius:16px;border:1.5px solid #fff"></div>
<div class="txt " style="left:1878.30px;top:58.23px;font-size:16.5px;line-height:16.5px;color:#fff;font-weight:bold">A</div>
<div class="abs" style="left:-4px;top:90px;width:52px;height:48px;background:#fff;border:1px solid #c4c4c4;border-radius:3px"></div>
<div class="abs" style="left:-4px;top:149px;width:53px;height:294px;background:#fff;border:1px solid #c4c4c4;border-radius:3px"></div>
<div class="abs" style="left:0;top:197px;width:48px;height:1px;background:#c4c4c4"></div>
<div class="abs" style="left:0;top:246px;width:48px;height:1px;background:#c4c4c4"></div>
<div class="abs" style="left:0;top:295px;width:48px;height:1px;background:#c4c4c4"></div>
<div class="abs" style="left:0;top:344px;width:48px;height:1px;background:#c4c4c4"></div>
<div class="abs" style="left:0;top:393px;width:48px;height:1px;background:#c4c4c4"></div>
<svg class="abs" style="left:0;top:149px" width="48" height="49" viewBox="0 0 48 49"><path d="M15.5 13.5H32.5L28.5 23L34.5 35.5H13.5L18 23Z" stroke="#c9c9d9" fill="none" stroke-width="1"/><path d="M12 24H21" stroke="#c9c9d9" stroke-width="1.3"/><path d="M20 21L25 24L20 27Z" fill="#c9c9d9"/></svg>
<svg class="abs" style="left:0;top:198px" width="48" height="49" viewBox="0 0 48 49"><path d="M19 12.5H32L29 19L33.5 28.5H20" stroke="#c9c9d9" fill="none" stroke-width="1"/><path d="M15.5 18H24L22 22.5L25.5 29.5H12.5L16 22.5Z" fill="#c9c9d9"/></svg>
<svg class="abs" style="left:0;top:247px" width="48" height="49" viewBox="0 0 48 49"><path d="M16 12.5H32L28.5 22L33 31.5H15L19.5 22Z" stroke="#c9c9d9" fill="none" stroke-width="1"/><path d="M15 18.5Q10 20 12 23Q14 25 17 24.5M33 18.5Q37 20 35.5 23Q34 25 31 24.5" stroke="#c9c9d9" fill="none" stroke-width="1"/><path d="M13 24H20" stroke="#c9c9d9" stroke-width="1.2"/><path d="M19 21.5L23.5 24L19 26.5Z" fill="#c9c9d9"/></svg>
<svg class="abs" style="left:0;top:296px" width="48" height="49" viewBox="0 0 48 49"><path d="M15 12.5H33L29.5 21L33.5 31.5H14.5L18.5 21Z" stroke="#c9c9d9" fill="none" stroke-width="1"/><path d="M24 12.5H33L29.5 21L33.5 31.5H24Z" fill="#c9c9d9"/><path d="M24 9V34" stroke="#c9c9d9" stroke-width="1"/></svg>
<svg class="abs" style="left:0;top:345px" width="48" height="49" viewBox="0 0 48 49"><path d="M22 10.5H36.5L34 18L38 27.5H25" stroke="#c9c9d9" fill="none" stroke-width="1"/><path d="M30 10H37L34.5 18L38.5 28H31.5Z" fill="#c9c9d9"/><path d="M17 16H29L27 22L30.5 32.5H17.5" stroke="#c9c9d9" fill="none" stroke-width="1"/><path d="M10 18H20.5L18.5 25L22 33.5H9L12.5 25Z" fill="#c9c9d9"/></svg>
<svg class="abs" style="left:0;top:394px" width="48" height="49" viewBox="0 0 48 49"><path d="M12.5 11.5H21.5V36.5H12.5Z" stroke="#c9c9d9" fill="none" stroke-width="1"/><path d="M20 21H26V29H36V37H20Z" fill="#c9c9d9"/><path d="M15 22L19 26M19 22L15 26" stroke="#c9c9d9" stroke-width="0.9"/></svg>
<div class="abs" style="left:1260.5px;top:114.5px;width:191px;height:205px;background:#fff;border:1px solid #c8c8c8;border-radius:3px"></div>
<svg class="abs" style="left:1276px;top:130px" width="16" height="16" viewBox="0 0 16 16"><path d="M8 1L15 4.5V12L8 15.5L1 12V4.5Z" fill="#666"/><path d="M1.5 4.8L8 8.3L14.5 4.8M8 8.3V15" stroke="#fff" stroke-width="1.2" fill="none"/></svg>
<svg class="abs" style="left:1306px;top:130px" width="16" height="16" viewBox="0 0 16 16"><path d="M1 5H11V15H1Z" fill="#666"/><path d="M1 5L5 1H15V11L11 15M11 5L15 1" stroke="#666" stroke-width="1" fill="none"/></svg>
<svg class="abs" style="left:1336px;top:130px" width="16" height="16" viewBox="0 0 16 16"><path d="M1 5L5 1H15L11 5Z" fill="#666"/><path d="M1 5H11V15H1Z M11 5L15 1V11L11 15" stroke="#666" stroke-width="1" fill="none"/></svg>
<svg class="abs" style="left:1366px;top:130px" width="16" height="16" viewBox="0 0 16 16"><path d="M1 1L5 5V15L1 11Z" fill="#666"/><path d="M5.5 5.5H14.5V14.5H5.5Z M1 1H11L15 5" stroke="#666" stroke-width="1" fill="none"/></svg>
<svg class="abs" style="left:1396px;top:130px" width="16" height="16" viewBox="0 0 16 16"><path d="M11 5L15 1V11L11 15Z" fill="#666"/><path d="M1 5H11V15H1Z M1 5L5 1H15" stroke="#666" stroke-width="1" fill="none"/></svg>
<div class="abs" style="left:1272px;top:159.5px;width:168px;height:23px;background:#fff;border:1px solid #c8c8c8;border-radius:2px"></div>
<div class="txt " style="left:1278.50px;top:165.69px;font-size:11px;line-height:11px;color:#191919">Цвет материала</div>
<svg class="abs" style="left:1419px;top:164px" width="14" height="12"><path d="M1.5 3L7 8.5L12.5 3" stroke="#555" stroke-width="1.7" fill="none"/></svg>
<div class="abs" style="left:1272.5px;top:190.5px;width:17px;height:17px;border:1px solid #c8c8c8;background:#fff"></div>
<svg class="abs" style="left:1272.5px;top:190.5px" width="17" height="17"><path d="M5 8.5L7.5 11L12 6" stroke="#3282ff" stroke-width="1.5" fill="none"/></svg>
<div class="txt " style="left:1295.40px;top:194.19px;font-size:11px;line-height:11px;color:#191919">Extruder 1</div>
<div class="abs" style="left:1272.5px;top:215.5px;width:17px;height:17px;border:1px solid #c8c8c8;background:#fff"></div>
<div class="txt " style="left:1295.40px;top:219.19px;font-size:11px;line-height:11px;color:#191919">Перемещения</div>
<div class="abs" style="left:1272.5px;top:240.5px;width:17px;height:17px;border:1px solid #c8c8c8;background:#fff"></div>
<svg class="abs" style="left:1272.5px;top:240.5px" width="17" height="17"><path d="M5 8.5L7.5 11L12 6" stroke="#3282ff" stroke-width="1.5" fill="none"/></svg>
<div class="txt " style="left:1295.40px;top:244.19px;font-size:11px;line-height:11px;color:#191919">Помощники</div>
<div class="abs" style="left:1272.5px;top:265.5px;width:17px;height:17px;border:1px solid #c8c8c8;background:#fff"></div>
<svg class="abs" style="left:1272.5px;top:265.5px" width="17" height="17"><path d="M5 8.5L7.5 11L12 6" stroke="#3282ff" stroke-width="1.5" fill="none"/></svg>
<div class="txt " style="left:1295.40px;top:269.19px;font-size:11px;line-height:11px;color:#191919">Ограждение</div>
<div class="abs" style="left:1272.5px;top:290.5px;width:17px;height:17px;border:1px solid #c8c8c8;background:#fff"></div>
<svg class="abs" style="left:1272.5px;top:290.5px" width="17" height="17"><path d="M5 8.5L7.5 11L12 6" stroke="#3282ff" stroke-width="1.5" fill="none"/></svg>
<div class="txt " style="left:1295.40px;top:294.19px;font-size:11px;line-height:11px;color:#191919">Заполнение</div>
<svg class="abs" style="left:1427px;top:192px" width="14" height="14"><path d="M1 1H13V11H8.5L7 13L5.5 11H1Z" fill="#8aab17"/></svg>
<div class="abs" style="left:1464px;top:90px;width:455px;height:860px;background:#fff;border:1px solid #c8c8c8;border-radius:3px"></div>
<div class="abs" style="left:1482px;top:102.5px;width:350px;height:29.5px;background:#fff;border:1px solid #c8c8c8;border-radius:2px"></div>
<div class="txt " style="left:1487.50px;top:111.49px;font-size:11px;line-height:11px;color:#191919">abs greg тестовый 19.06.19 <span style="color:#b4b4b4">- 0.2mm</span></div>
<svg class="abs" style="left:1790px;top:109px" width="16" height="15" viewBox="0 0 16 15"><path d="M8 1L9.9 5.6L14.8 6L11.1 9.2L12.2 14L8 11.5L3.8 14L4.9 9.2L1.2 6L6.1 5.6Z" fill="#666"/></svg>
<svg class="abs" style="left:1807px;top:112px" width="14" height="10"><path d="M1.5 2L7 7.5L12.5 2" stroke="#555" stroke-width="1.7" fill="none"/></svg>
<div class="abs" style="left:1844px;top:108.5px;width:27px;height:17.5px;border-radius:9px;background:#3282ff"></div>
<div class="abs" style="left:1853px;top:108.5px;width:17.5px;height:17.5px;border-radius:9px;background:#fff;border:1px solid #b8c8e8"></div>
<div class="txt " style="left:1876.80px;top:112.07px;font-size:11.5px;line-height:11.5px;color:#191919">Свое</div>
<div class="abs" style="left:1464px;top:183px;width:455px;height:1px;background:#c8c8c8"></div>
<div class="abs" style="left:1481.5px;top:144.5px;width:384px;height:40px;background:#fff;border:1px solid #c8c8c8;border-bottom:none;border-radius:2px 2px 0 0"></div>
<svg class="abs" style="left:1487px;top:149.5px" width="29" height="29" viewBox="0 0 29 29"><path d="M0 0H28V22H19L14 27.5L9 22H0Z" fill="#8aab17"/><circle cx="14" cy="11.7" r="6.8" fill="#fff"/><text x="14" y="15" text-anchor="middle" font-size="9" font-family="Liberation Sans" fill="#191919">1</text></svg>
<div class="txt " style="left:1526.40px;top:152.17px;font-size:10.9px;line-height:10.9px;color:#191919">Generic ABS</div>
<svg class="abs" style="left:1877px;top:157px" width="12" height="14"><path d="M9 1.5L4 7L9 12.5" stroke="#191919" stroke-width="1.6" fill="none"/></svg>
<div class="abs" style="left:1481.5px;top:196.5px;width:381px;height:29px;background:#fff;border:1px solid #c8c8c8;border-radius:2px"></div>
<svg class="abs" style="left:1486px;top:202px" width="17" height="17"><circle cx="7" cy="7" r="5.2" stroke="#888" stroke-width="1.3" fill="none"/><path d="M10.8 10.8L15 15" stroke="#888" stroke-width="1.6"/></svg>
<div class="txt " style="left:1502.60px;top:206.66px;font-size:10.8px;line-height:10.8px;color:#aeaeae;font-style:italic">параметры поиска</div>
<svg class="abs" style="left:1876px;top:205px" width="14" height="12"><path d="M1 1.8H13M1 6H13M1 10.2H13" stroke="#444" stroke-width="1.7"/></svg>
<div class="cat" style="top:238px"></div>
<svg class="abs" style="left:1491px;top:241px" width="18" height="18" viewBox="0 0 18 18"><path d="M1 1.5H16V5H1Z M1 7.5H13V9.5H1Z M1 12H10V14H1Z M2 16H8V17H2Z" fill="#191919"/></svg>
<div class="txt " style="left:1524.20px;top:243.96px;font-size:13.4px;line-height:13.4px;font-weight:bold;color:#191919">Качество</div>
<svg class="abs" style="left:1873px;top:243px" width="10" height="14"><path d="M7.5 1.5L2.5 7L7.5 12.5" stroke="#444" stroke-width="1.4" fill="none"/></svg>
<div class="cat" style="top:263px"></div>
<svg class="abs" style="left:1491px;top:266px" width="18" height="18" viewBox="0 0 18 18"><path d="M3 1.5H14M4 1.5L2 16.5M13 1.5L15 16.5M1 16.5H16M6 1.5L5 16.5M11 1.5L12 16.5" stroke="#191919" stroke-width="1.1" fill="none"/></svg>
<div class="txt " style="left:1524.20px;top:268.96px;font-size:13.4px;line-height:13.4px;font-weight:bold;color:#191919">Ограждение</div>
<svg class="abs" style="left:1873px;top:268px" width="10" height="14"><path d="M7.5 1.5L2.5 7L7.5 12.5" stroke="#444" stroke-width="1.4" fill="none"/></svg>
<div class="cat" style="top:288px"></div>
<svg class="abs" style="left:1491px;top:291px" width="18" height="18" viewBox="0 0 18 18"><path d="M1.5 1.5H15.5V15.5H1.5Z M1.5 8.5L8.5 1.5L15.5 8.5L8.5 15.5Z M1.5 1.5L15.5 15.5M15.5 1.5L1.5 15.5" stroke="#191919" stroke-width="0.9" fill="none"/></svg>
<div class="txt " style="left:1524.20px;top:293.96px;font-size:13.4px;line-height:13.4px;font-weight:bold;color:#191919">Заполнение</div>
<svg class="abs" style="left:1873px;top:293px" width="10" height="14"><path d="M7.5 1.5L2.5 7L7.5 12.5" stroke="#444" stroke-width="1.4" fill="none"/></svg>
<div class="cat" style="top:313px"></div>
<svg class="abs" style="left:1491px;top:316px" width="18" height="18" viewBox="0 0 18 18"><path d="M1.5 1V16M4.5 2V16M7 1V17M9.5 3V16M12 1V16M15 2V16" stroke="#191919" stroke-width="1.1" fill="none"/></svg>
<div class="txt " style="left:1524.20px;top:318.96px;font-size:13.4px;line-height:13.4px;font-weight:bold;color:#191919">Материал</div>
<svg class="abs" style="left:1873px;top:318px" width="10" height="14"><path d="M7.5 1.5L2.5 7L7.5 12.5" stroke="#444" stroke-width="1.4" fill="none"/></svg>
<div class="cat" style="top:338px"></div>
<svg class="abs" style="left:1491px;top:341px" width="18" height="18" viewBox="0 0 18 18"><circle cx="8.5" cy="9" r="7.2" stroke="#191919" stroke-width="1.2" fill="none"/><path d="M8.5 9L11.5 4M8.5 2V4" stroke="#191919" stroke-width="1.2"/></svg>
<div class="txt " style="left:1524.20px;top:343.96px;font-size:13.4px;line-height:13.4px;font-weight:bold;color:#191919">Скорость</div>
<svg class="abs" style="left:1873px;top:343px" width="10" height="14"><path d="M7.5 1.5L2.5 7L7.5 12.5" stroke="#444" stroke-width="1.4" fill="none"/></svg>
<div class="cat" style="top:363px"></div>
<svg class="abs" style="left:1491px;top:366px" width="18" height="18" viewBox="0 0 18 18"><path d="M10 1H15.5V4L12.7 6L10 4Z" fill="#191919"/><path d="M12.7 6V10M4 11H15M3 13H15M1.5 15.5H15.5" stroke="#191919" stroke-width="0.9" fill="none"/></svg>
<div class="txt " style="left:1524.20px;top:368.96px;font-size:13.4px;line-height:13.4px;font-weight:bold;color:#191919">Перемещение</div>
<svg class="abs" style="left:1873px;top:368px" width="10" height="14"><path d="M7.5 1.5L2.5 7L7.5 12.5" stroke="#444" stroke-width="1.4" fill="none"/></svg>
<div class="cat" style="top:388px"></div>
<svg class="abs" style="left:1491px;top:391px" width="18" height="18" viewBox="0 0 18 18"><g stroke="#191919" stroke-width="1.6" fill="none"><path d="M8.5 8.5Q6 3 9.5 1M8.5 8.5Q14 6 16 9.5M8.5 8.5Q11 14 7.5 16M8.5 8.5Q3 11 1 7.5"/><path d="M8.5 8.5Q11.5 3 15 3.5M8.5 8.5Q14 11.5 13.5 15M8.5 8.5Q5.5 14 2 13.5M8.5 8.5Q3 5.5 3.5 2"/></g></svg>
<div class="txt " style="left:1524.20px;top:393.96px;font-size:13.4px;line-height:13.4px;font-weight:bold;color:#191919">Охлаждение</div>
<svg class="abs" style="left:1873px;top:393px" width="10" height="14"><path d="M7.5 1.5L2.5 7L7.5 12.5" stroke="#444" stroke-width="1.4" fill="none"/></svg>
<div class="cat" style="top:413px"></div>
<svg class="abs" style="left:1491px;top:416px" width="18" height="18" viewBox="0 0 18 18"><path d="M6 1H15L13.5 8L16 16H10" stroke="#191919" stroke-width="0.9" fill="none"/><path d="M1 8H4V10H7V13H10V17H1Z" fill="#191919"/></svg>
<div class="txt " style="left:1524.20px;top:418.96px;font-size:13.4px;line-height:13.4px;font-weight:bold;color:#191919">Поддержки</div>
<svg class="abs" style="left:1873px;top:418px" width="10" height="14"><path d="M7.5 1.5L2.5 7L7.5 12.5" stroke="#444" stroke-width="1.4" fill="none"/></svg>
<div class="cat" style="top:438px"></div>
<svg class="abs" style="left:1491px;top:441px" width="18" height="18" viewBox="0 0 18 18"><path d="M1 8.5H16" stroke="#191919" stroke-width="1.1"/><path d="M8.5 0V5M8.5 12V17" stroke="#191919" stroke-width="0.9"/><path d="M6.5 3.5L8.5 6.5L10.5 3.5Z M6.5 13.5L8.5 10.5L10.5 13.5Z" fill="#191919"/></svg>
<div class="txt " style="left:1524.20px;top:443.96px;font-size:13.4px;line-height:13.4px;font-weight:bold;color:#191919">Тип прилипания к столу</div>
<svg class="abs" style="left:1873px;top:443px" width="10" height="14"><path d="M7.5 1.5L2.5 7L7.5 12.5" stroke="#444" stroke-width="1.4" fill="none"/></svg>
<div class="cat" style="top:463px"></div>
<svg class="abs" style="left:1491px;top:466px" width="18" height="18" viewBox="0 0 18 18"><path d="M4.5 2H13L12 9L14.5 16H2.5L5 9Z" stroke="#191919" stroke-width="0.9" fill="none"/><path d="M9 2H13L12 9L14.5 16H9Z" fill="#191919"/><path d="M9 0V18" stroke="#191919" stroke-width="1"/></svg>
<div class="txt " style="left:1524.20px;top:468.96px;font-size:13.4px;line-height:13.4px;font-weight:bold;color:#191919">Два экструдера</div>
<svg class="abs" style="left:1871px;top:470px" width="14" height="10"><path d="M1.5 2L7 7.5L12.5 2" stroke="#444" stroke-width="1.4" fill="none"/></svg>
<div class="cat" style="top:488px"></div>
<svg class="abs" style="left:1491px;top:491px" width="18" height="18" viewBox="0 0 18 18"><path d="M3 1.5H14L12 9L15 16.5H2L5 9Z" stroke="#191919" stroke-width="1" fill="none"/><path d="M4 10L8 8L7 12L13 13" stroke="#191919" stroke-width="0.8" fill="none"/></svg>
<div class="txt " style="left:1524.20px;top:493.96px;font-size:13.4px;line-height:13.4px;font-weight:bold;color:#191919">Ремонт объектов</div>
<svg class="abs" style="left:1873px;top:493px" width="10" height="14"><path d="M7.5 1.5L2.5 7L7.5 12.5" stroke="#444" stroke-width="1.4" fill="none"/></svg>
<div class="cat" style="top:513px"></div>
<svg class="abs" style="left:1491px;top:516px" width="18" height="18" viewBox="0 0 18 18"><path d="M3 1.5H14L12 9L15 16.5H2L5 9Z" stroke="#191919" stroke-width="1" fill="none"/><path d="M6 6Q6 3.5 8.5 3.5Q11 3.5 10.5 6Q10 7.5 8.5 8V10" stroke="#191919" stroke-width="1" fill="none"/><circle cx="8.5" cy="12.5" r="0.8" fill="#191919"/></svg>
<div class="txt " style="left:1524.20px;top:518.96px;font-size:13.4px;line-height:13.4px;font-weight:bold;color:#191919">Специальные режимы</div>
<svg class="abs" style="left:1873px;top:518px" width="10" height="14"><path d="M7.5 1.5L2.5 7L7.5 12.5" stroke="#444" stroke-width="1.4" fill="none"/></svg>
<div class="cat" style="top:538px"></div>
<svg class="abs" style="left:1491px;top:541px" width="18" height="18" viewBox="0 0 18 18"><path d="M5.5 1H11.5V6L15.5 16.5H1.5L5.5 6Z" stroke="#191919" stroke-width="1" fill="none"/><path d="M4 10H13L15.5 16.5H1.5Z" fill="#191919"/><circle cx="7" cy="13" r="1" fill="#fff"/><circle cx="10.5" cy="14" r="0.8" fill="#fff"/></svg>
<div class="txt " style="left:1524.20px;top:543.96px;font-size:13.4px;line-height:13.4px;font-weight:bold;color:#191919">Экспериментальное</div>
<svg class="abs" style="left:1873px;top:543px" width="10" height="14"><path d="M7.5 1.5L2.5 7L7.5 12.5" stroke="#444" stroke-width="1.4" fill="none"/></svg>
<div class="abs" style="left:1464px;top:960px;width:460px;height:124px;background:#fff;border:1px solid #c8c8c8;border-radius:3px"></div>
<svg class="abs" style="left:1493px;top:976px" width="21" height="21"><circle cx="10.3" cy="10.5" r="9" stroke="#08073f" stroke-width="1.3" fill="none"/><path d="M10.3 4.5V10.5L14 13.8" stroke="#08073f" stroke-width="1.3" fill="none"/></svg>
<div class="txt " style="left:1520.00px;top:980.46px;font-size:13.4px;line-height:13.4px;font-weight:bold;color:#191919">14 минут</div>
<svg class="abs" style="left:1879px;top:977px" width="20" height="20"><circle cx="10" cy="9.5" r="9.5" fill="#08073f"/><circle cx="10.7" cy="5.2" r="1.5" fill="#fff"/><path d="M8 8.2H11.6L10.3 13.8Q10.2 14.5 11.5 14L11.3 15Q9.5 15.8 8.3 15.2Q7.6 14.8 7.9 13.8L8.9 9.4H7.8Z" fill="#fff"/></svg>
<svg class="abs" style="left:1494px;top:1005px" width="18" height="19"><path d="M1.5 1V17M4.5 2V16M7 1V18M9.5 3V16M12 1V16M15 2V17" stroke="#08073f" stroke-width="1.1" fill="none"/></svg>
<div class="txt " style="left:1519.00px;top:1009.72px;font-size:11.2px;line-height:11.2px;color:#191919">3g · 1.15m</div>
<div class="abs" style="left:1494px;top:1033.5px;width:405px;height:31px;background:#2671e7;border-radius:2px"></div>
<div class="txt " style="left:1642.00px;top:1042.63px;font-size:12.6px;line-height:12.6px;color:#fff">Сохранить в файл</div>
<div class="abs" style="left:1440px;top:765px;width:6px;height:264px;background:#08073f"></div>
<div class="abs" style="left:1434.1px;top:755.9px;width:17.8px;height:17.8px;border-radius:9px;background:#08073f"></div>
<div class="abs" style="left:1434.1px;top:1020.1px;width:17.8px;height:17.8px;border-radius:9px;background:#08073f"></div>
<div class="abs" style="left:1434.1px;top:1050.1px;width:17.8px;height:17.8px;border-radius:9px;background:#08073f"></div>
<div class="abs" style="left:1149px;top:1056.1px;width:295px;height:6px;background:#08073f;border-radius:3px"></div>
<div class="abs" style="left:1918px;top:90px;width:2px;height:12px;background:#fafafa"></div>
<svg class="abs" style="left:1362px;top:749px" width="66" height="34"><path d="M1.5 1.5H53.5V6L63.5 16L53.5 26V31.5H1.5Z" fill="#fff" stroke="#c8c8c8" stroke-width="1"/></svg>
<div class="txt " style="left:1388.40px;top:759.69px;font-size:11px;line-height:11px;color:#191919">187</div>
<svg class="abs" style="left:1118px;top:1048px" width="20" height="22"><path d="M2 2L17 11L2 20Z" fill="#08073f"/></svg>
<svg class="abs" style="left:12px;top:1026px" width="17" height="17" viewBox="0 0 17 17"><path d="M2 11.5L11.5 2L15 5.5L5.5 15H2Z" fill="#666"/><path d="M10 3.5L13.5 7" stroke="#f3f3f3" stroke-width="1"/></svg>
<div class="txt " style="left:38.50px;top:1030.26px;font-size:10.8px;line-height:10.8px;color:#666">CFFFP_Body4 (Cut 2)</div>
<div class="txt " style="left:12.20px;top:1054.29px;font-size:11px;line-height:11px;color:#666">31.6 x 38.2 x 37.6 мм</div>
</body></html>
